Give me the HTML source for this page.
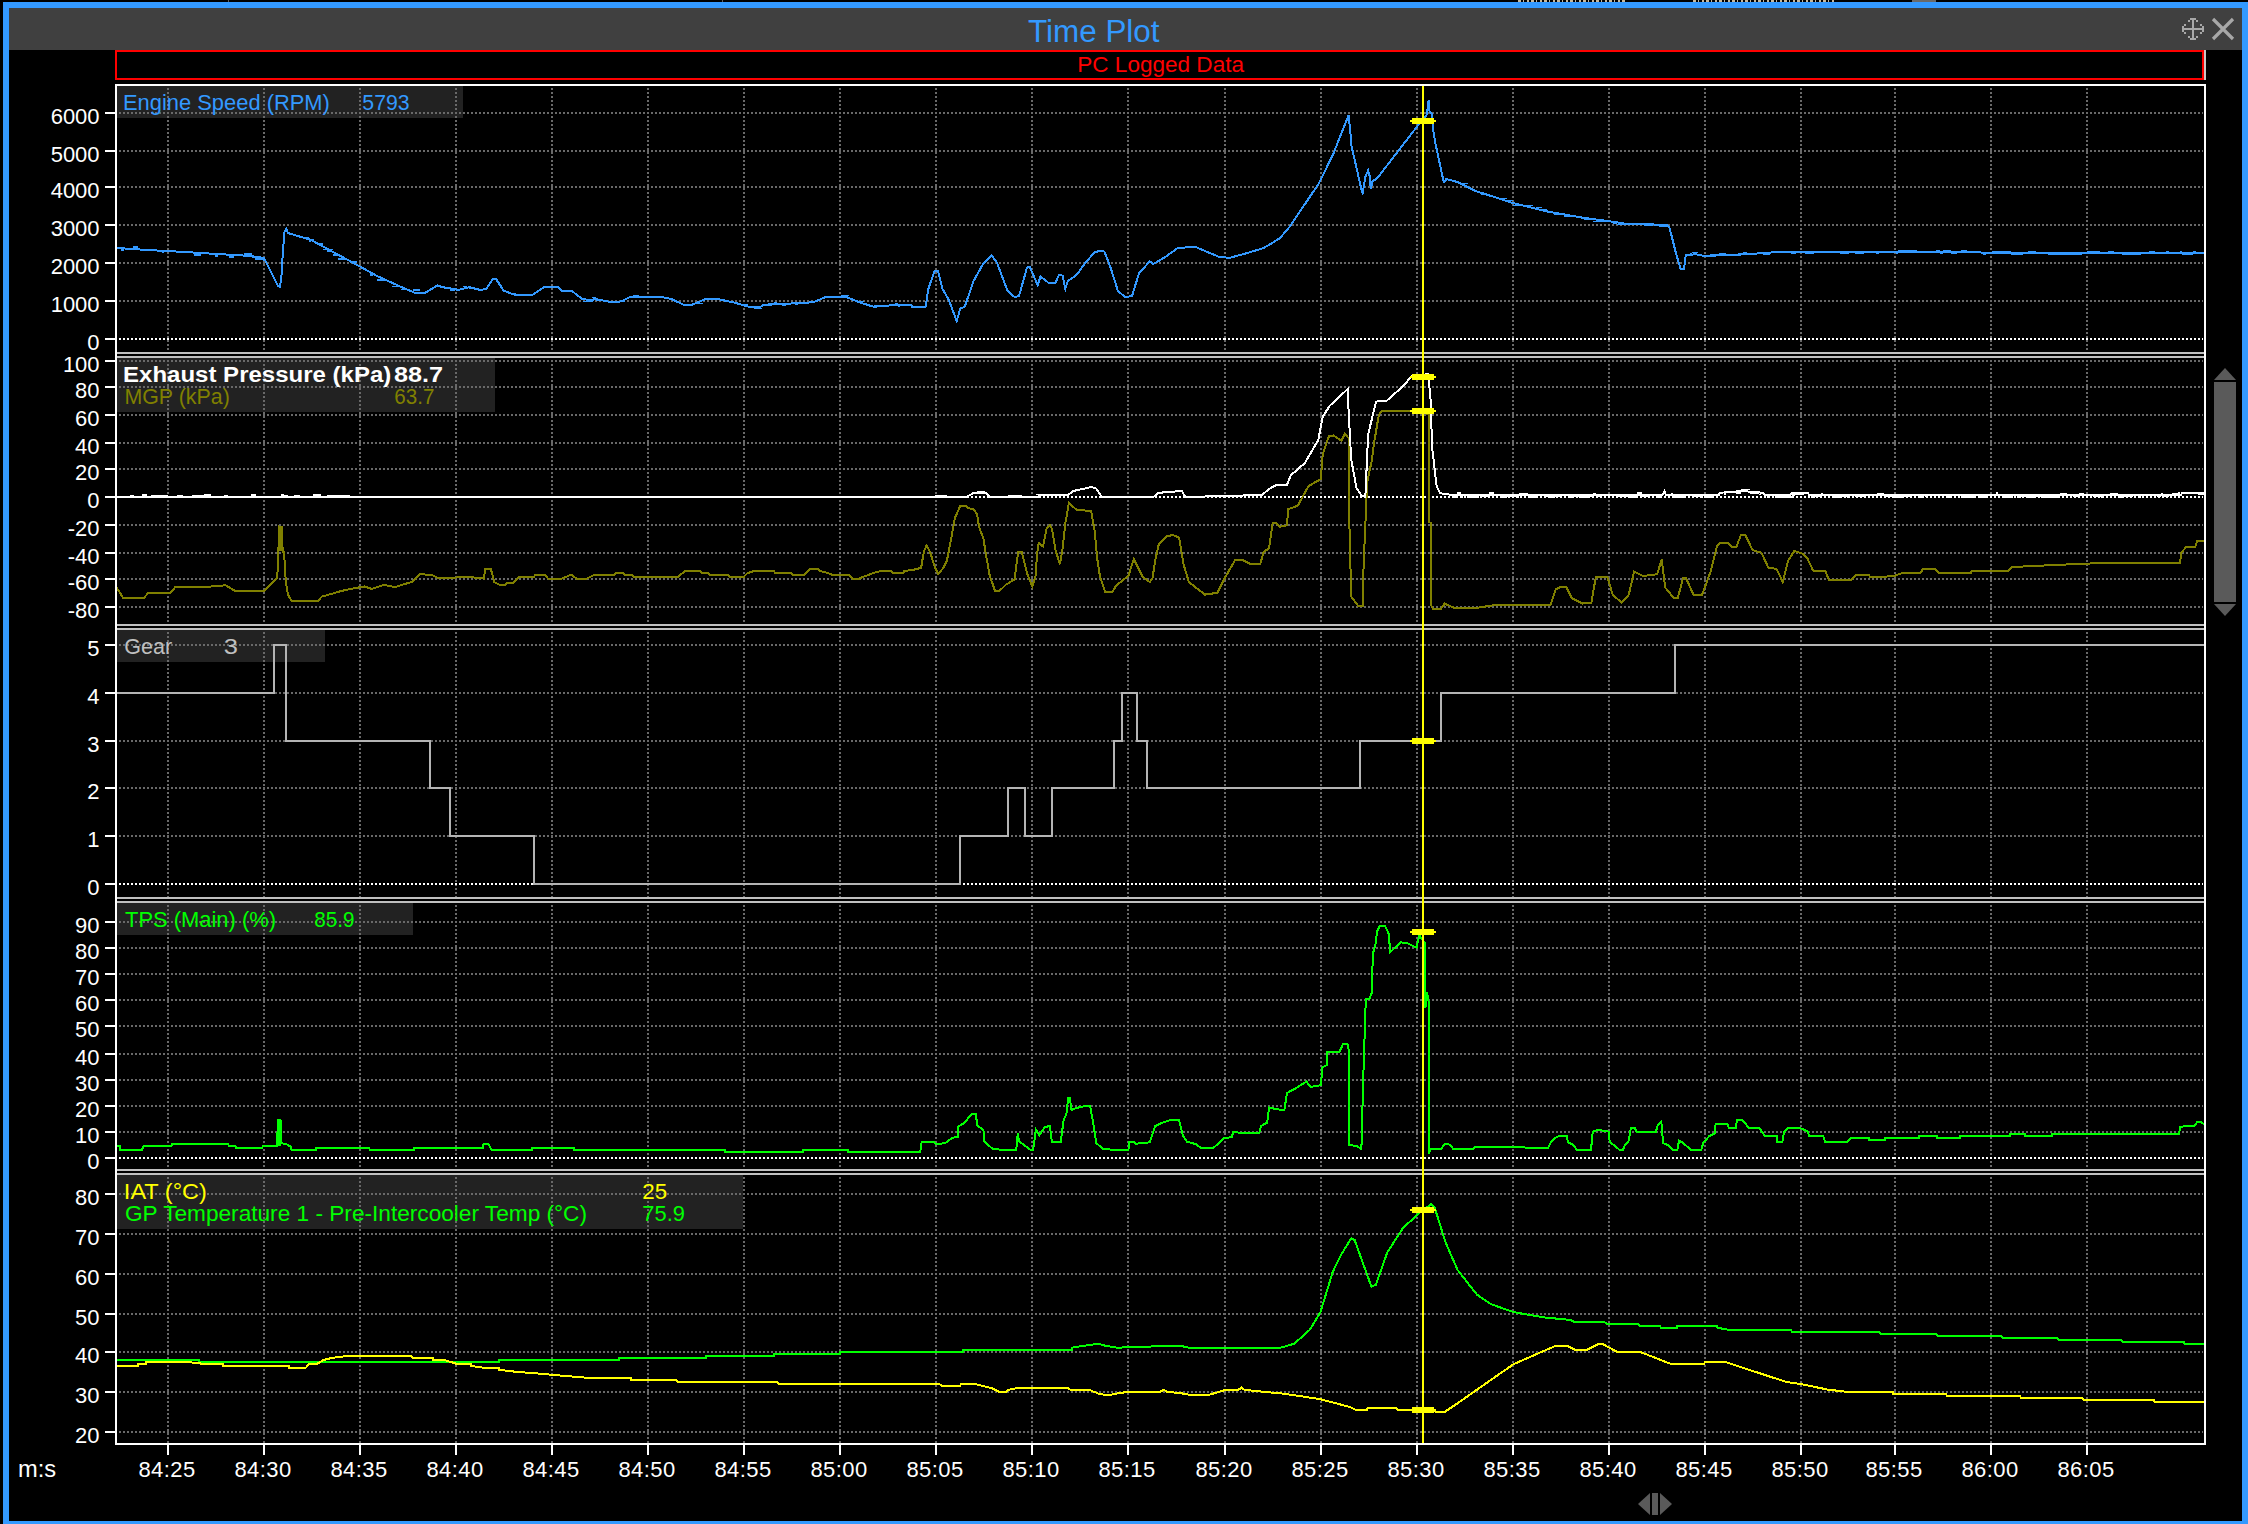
<!DOCTYPE html><html><head><meta charset="utf-8"><title>Time Plot</title><style>
html,body{margin:0;padding:0;background:#000;width:2248px;height:1524px;overflow:hidden}
svg{display:block}
text{font-family:"Liberation Sans",sans-serif}
</style></head><body>
<svg width="2248" height="1524" viewBox="0 0 2248 1524">
<rect x="0" y="0" width="2248" height="1524" fill="#000"/>
<g shape-rendering="crispEdges">
<line x1="1518" y1="1" x2="1625" y2="1" stroke="#c8b89a" stroke-width="2" stroke-dasharray="3 2 1 3 2 2"/>
<line x1="1693" y1="1" x2="1835" y2="1" stroke="#c8b89a" stroke-width="2" stroke-dasharray="3 2 1 3 2 2"/>
<rect x="1912" y="0" width="24" height="2" fill="#6a6a6a"/>
<rect x="228" y="0" width="1" height="2" fill="#606060"/><rect x="722" y="0" width="1" height="2" fill="#606060"/>
<rect x="3" y="2" width="2245" height="1522" fill="#3399ff"/>
<rect x="9" y="8" width="2233" height="1513" fill="#000"/>
<rect x="9" y="8" width="2233" height="42" fill="#404040"/>
<rect x="116" y="51" width="2087" height="28" fill="none" stroke="#ff0000" stroke-width="2"/>
<rect x="2204" y="50" width="2" height="30" fill="#c8c8c8"/>
<rect x="117" y="86" width="346" height="32" fill="#222"/>
<rect x="117" y="358" width="378" height="54" fill="#222"/>
<rect x="117" y="630" width="208" height="32" fill="#222"/>
<rect x="117" y="903" width="296" height="32" fill="#222"/>
<rect x="117" y="1175" width="626" height="54" fill="#222"/>
</g>
<g shape-rendering="crispEdges" stroke-width="2" stroke-dasharray="2 2">
<line x1="168" y1="84" x2="168" y2="352" stroke="#696969"/>
<line x1="264" y1="84" x2="264" y2="352" stroke="#696969"/>
<line x1="360" y1="84" x2="360" y2="352" stroke="#696969"/>
<line x1="456" y1="84" x2="456" y2="352" stroke="#696969"/>
<line x1="552" y1="84" x2="552" y2="352" stroke="#696969"/>
<line x1="648" y1="84" x2="648" y2="352" stroke="#696969"/>
<line x1="744" y1="84" x2="744" y2="352" stroke="#696969"/>
<line x1="840" y1="84" x2="840" y2="352" stroke="#696969"/>
<line x1="936" y1="84" x2="936" y2="352" stroke="#696969"/>
<line x1="1032" y1="84" x2="1032" y2="352" stroke="#696969"/>
<line x1="1128" y1="84" x2="1128" y2="352" stroke="#696969"/>
<line x1="1225" y1="84" x2="1225" y2="352" stroke="#696969"/>
<line x1="1321" y1="84" x2="1321" y2="352" stroke="#696969"/>
<line x1="1417" y1="84" x2="1417" y2="352" stroke="#696969"/>
<line x1="1513" y1="84" x2="1513" y2="352" stroke="#696969"/>
<line x1="1609" y1="84" x2="1609" y2="352" stroke="#696969"/>
<line x1="1705" y1="84" x2="1705" y2="352" stroke="#696969"/>
<line x1="1801" y1="84" x2="1801" y2="352" stroke="#696969"/>
<line x1="1895" y1="84" x2="1895" y2="352" stroke="#696969"/>
<line x1="1991" y1="84" x2="1991" y2="352" stroke="#696969"/>
<line x1="2087" y1="84" x2="2087" y2="352" stroke="#696969"/>
<line x1="168" y1="356" x2="168" y2="624" stroke="#696969"/>
<line x1="264" y1="356" x2="264" y2="624" stroke="#696969"/>
<line x1="360" y1="356" x2="360" y2="624" stroke="#696969"/>
<line x1="456" y1="356" x2="456" y2="624" stroke="#696969"/>
<line x1="552" y1="356" x2="552" y2="624" stroke="#696969"/>
<line x1="648" y1="356" x2="648" y2="624" stroke="#696969"/>
<line x1="744" y1="356" x2="744" y2="624" stroke="#696969"/>
<line x1="840" y1="356" x2="840" y2="624" stroke="#696969"/>
<line x1="936" y1="356" x2="936" y2="624" stroke="#696969"/>
<line x1="1032" y1="356" x2="1032" y2="624" stroke="#696969"/>
<line x1="1128" y1="356" x2="1128" y2="624" stroke="#696969"/>
<line x1="1225" y1="356" x2="1225" y2="624" stroke="#696969"/>
<line x1="1321" y1="356" x2="1321" y2="624" stroke="#696969"/>
<line x1="1417" y1="356" x2="1417" y2="624" stroke="#696969"/>
<line x1="1513" y1="356" x2="1513" y2="624" stroke="#696969"/>
<line x1="1609" y1="356" x2="1609" y2="624" stroke="#696969"/>
<line x1="1705" y1="356" x2="1705" y2="624" stroke="#696969"/>
<line x1="1801" y1="356" x2="1801" y2="624" stroke="#696969"/>
<line x1="1895" y1="356" x2="1895" y2="624" stroke="#696969"/>
<line x1="1991" y1="356" x2="1991" y2="624" stroke="#696969"/>
<line x1="2087" y1="356" x2="2087" y2="624" stroke="#696969"/>
<line x1="168" y1="628" x2="168" y2="897" stroke="#696969"/>
<line x1="264" y1="628" x2="264" y2="897" stroke="#696969"/>
<line x1="360" y1="628" x2="360" y2="897" stroke="#696969"/>
<line x1="456" y1="628" x2="456" y2="897" stroke="#696969"/>
<line x1="552" y1="628" x2="552" y2="897" stroke="#696969"/>
<line x1="648" y1="628" x2="648" y2="897" stroke="#696969"/>
<line x1="744" y1="628" x2="744" y2="897" stroke="#696969"/>
<line x1="840" y1="628" x2="840" y2="897" stroke="#696969"/>
<line x1="936" y1="628" x2="936" y2="897" stroke="#696969"/>
<line x1="1032" y1="628" x2="1032" y2="897" stroke="#696969"/>
<line x1="1128" y1="628" x2="1128" y2="897" stroke="#696969"/>
<line x1="1225" y1="628" x2="1225" y2="897" stroke="#696969"/>
<line x1="1321" y1="628" x2="1321" y2="897" stroke="#696969"/>
<line x1="1417" y1="628" x2="1417" y2="897" stroke="#696969"/>
<line x1="1513" y1="628" x2="1513" y2="897" stroke="#696969"/>
<line x1="1609" y1="628" x2="1609" y2="897" stroke="#696969"/>
<line x1="1705" y1="628" x2="1705" y2="897" stroke="#696969"/>
<line x1="1801" y1="628" x2="1801" y2="897" stroke="#696969"/>
<line x1="1895" y1="628" x2="1895" y2="897" stroke="#696969"/>
<line x1="1991" y1="628" x2="1991" y2="897" stroke="#696969"/>
<line x1="2087" y1="628" x2="2087" y2="897" stroke="#696969"/>
<line x1="168" y1="901" x2="168" y2="1169" stroke="#696969"/>
<line x1="264" y1="901" x2="264" y2="1169" stroke="#696969"/>
<line x1="360" y1="901" x2="360" y2="1169" stroke="#696969"/>
<line x1="456" y1="901" x2="456" y2="1169" stroke="#696969"/>
<line x1="552" y1="901" x2="552" y2="1169" stroke="#696969"/>
<line x1="648" y1="901" x2="648" y2="1169" stroke="#696969"/>
<line x1="744" y1="901" x2="744" y2="1169" stroke="#696969"/>
<line x1="840" y1="901" x2="840" y2="1169" stroke="#696969"/>
<line x1="936" y1="901" x2="936" y2="1169" stroke="#696969"/>
<line x1="1032" y1="901" x2="1032" y2="1169" stroke="#696969"/>
<line x1="1128" y1="901" x2="1128" y2="1169" stroke="#696969"/>
<line x1="1225" y1="901" x2="1225" y2="1169" stroke="#696969"/>
<line x1="1321" y1="901" x2="1321" y2="1169" stroke="#696969"/>
<line x1="1417" y1="901" x2="1417" y2="1169" stroke="#696969"/>
<line x1="1513" y1="901" x2="1513" y2="1169" stroke="#696969"/>
<line x1="1609" y1="901" x2="1609" y2="1169" stroke="#696969"/>
<line x1="1705" y1="901" x2="1705" y2="1169" stroke="#696969"/>
<line x1="1801" y1="901" x2="1801" y2="1169" stroke="#696969"/>
<line x1="1895" y1="901" x2="1895" y2="1169" stroke="#696969"/>
<line x1="1991" y1="901" x2="1991" y2="1169" stroke="#696969"/>
<line x1="2087" y1="901" x2="2087" y2="1169" stroke="#696969"/>
<line x1="168" y1="1173" x2="168" y2="1443" stroke="#696969"/>
<line x1="264" y1="1173" x2="264" y2="1443" stroke="#696969"/>
<line x1="360" y1="1173" x2="360" y2="1443" stroke="#696969"/>
<line x1="456" y1="1173" x2="456" y2="1443" stroke="#696969"/>
<line x1="552" y1="1173" x2="552" y2="1443" stroke="#696969"/>
<line x1="648" y1="1173" x2="648" y2="1443" stroke="#696969"/>
<line x1="744" y1="1173" x2="744" y2="1443" stroke="#696969"/>
<line x1="840" y1="1173" x2="840" y2="1443" stroke="#696969"/>
<line x1="936" y1="1173" x2="936" y2="1443" stroke="#696969"/>
<line x1="1032" y1="1173" x2="1032" y2="1443" stroke="#696969"/>
<line x1="1128" y1="1173" x2="1128" y2="1443" stroke="#696969"/>
<line x1="1225" y1="1173" x2="1225" y2="1443" stroke="#696969"/>
<line x1="1321" y1="1173" x2="1321" y2="1443" stroke="#696969"/>
<line x1="1417" y1="1173" x2="1417" y2="1443" stroke="#696969"/>
<line x1="1513" y1="1173" x2="1513" y2="1443" stroke="#696969"/>
<line x1="1609" y1="1173" x2="1609" y2="1443" stroke="#696969"/>
<line x1="1705" y1="1173" x2="1705" y2="1443" stroke="#696969"/>
<line x1="1801" y1="1173" x2="1801" y2="1443" stroke="#696969"/>
<line x1="1895" y1="1173" x2="1895" y2="1443" stroke="#696969"/>
<line x1="1991" y1="1173" x2="1991" y2="1443" stroke="#696969"/>
<line x1="2087" y1="1173" x2="2087" y2="1443" stroke="#696969"/>
<line x1="119" y1="113" x2="263" y2="113" stroke="#696969"/>
<line x1="263" y1="113" x2="359" y2="113" stroke="#696969"/>
<line x1="359" y1="113" x2="455" y2="113" stroke="#696969"/>
<line x1="455" y1="113" x2="551" y2="113" stroke="#696969"/>
<line x1="551" y1="113" x2="647" y2="113" stroke="#696969"/>
<line x1="647" y1="113" x2="743" y2="113" stroke="#696969"/>
<line x1="743" y1="113" x2="839" y2="113" stroke="#696969"/>
<line x1="839" y1="113" x2="935" y2="113" stroke="#696969"/>
<line x1="935" y1="113" x2="1031" y2="113" stroke="#696969"/>
<line x1="1031" y1="113" x2="1127" y2="113" stroke="#696969"/>
<line x1="1127" y1="113" x2="1224" y2="113" stroke="#696969"/>
<line x1="1224" y1="113" x2="1320" y2="113" stroke="#696969"/>
<line x1="1320" y1="113" x2="1416" y2="113" stroke="#696969"/>
<line x1="1416" y1="113" x2="1512" y2="113" stroke="#696969"/>
<line x1="1512" y1="113" x2="1608" y2="113" stroke="#696969"/>
<line x1="1608" y1="113" x2="1704" y2="113" stroke="#696969"/>
<line x1="1704" y1="113" x2="1800" y2="113" stroke="#696969"/>
<line x1="1800" y1="113" x2="1894" y2="113" stroke="#696969"/>
<line x1="1894" y1="113" x2="1990" y2="113" stroke="#696969"/>
<line x1="1990" y1="113" x2="2086" y2="113" stroke="#696969"/>
<line x1="2086" y1="113" x2="2203" y2="113" stroke="#696969"/>
<line x1="119" y1="151" x2="263" y2="151" stroke="#696969"/>
<line x1="263" y1="151" x2="359" y2="151" stroke="#696969"/>
<line x1="359" y1="151" x2="455" y2="151" stroke="#696969"/>
<line x1="455" y1="151" x2="551" y2="151" stroke="#696969"/>
<line x1="551" y1="151" x2="647" y2="151" stroke="#696969"/>
<line x1="647" y1="151" x2="743" y2="151" stroke="#696969"/>
<line x1="743" y1="151" x2="839" y2="151" stroke="#696969"/>
<line x1="839" y1="151" x2="935" y2="151" stroke="#696969"/>
<line x1="935" y1="151" x2="1031" y2="151" stroke="#696969"/>
<line x1="1031" y1="151" x2="1127" y2="151" stroke="#696969"/>
<line x1="1127" y1="151" x2="1224" y2="151" stroke="#696969"/>
<line x1="1224" y1="151" x2="1320" y2="151" stroke="#696969"/>
<line x1="1320" y1="151" x2="1416" y2="151" stroke="#696969"/>
<line x1="1416" y1="151" x2="1512" y2="151" stroke="#696969"/>
<line x1="1512" y1="151" x2="1608" y2="151" stroke="#696969"/>
<line x1="1608" y1="151" x2="1704" y2="151" stroke="#696969"/>
<line x1="1704" y1="151" x2="1800" y2="151" stroke="#696969"/>
<line x1="1800" y1="151" x2="1894" y2="151" stroke="#696969"/>
<line x1="1894" y1="151" x2="1990" y2="151" stroke="#696969"/>
<line x1="1990" y1="151" x2="2086" y2="151" stroke="#696969"/>
<line x1="2086" y1="151" x2="2203" y2="151" stroke="#696969"/>
<line x1="119" y1="187" x2="263" y2="187" stroke="#696969"/>
<line x1="263" y1="187" x2="359" y2="187" stroke="#696969"/>
<line x1="359" y1="187" x2="455" y2="187" stroke="#696969"/>
<line x1="455" y1="187" x2="551" y2="187" stroke="#696969"/>
<line x1="551" y1="187" x2="647" y2="187" stroke="#696969"/>
<line x1="647" y1="187" x2="743" y2="187" stroke="#696969"/>
<line x1="743" y1="187" x2="839" y2="187" stroke="#696969"/>
<line x1="839" y1="187" x2="935" y2="187" stroke="#696969"/>
<line x1="935" y1="187" x2="1031" y2="187" stroke="#696969"/>
<line x1="1031" y1="187" x2="1127" y2="187" stroke="#696969"/>
<line x1="1127" y1="187" x2="1224" y2="187" stroke="#696969"/>
<line x1="1224" y1="187" x2="1320" y2="187" stroke="#696969"/>
<line x1="1320" y1="187" x2="1416" y2="187" stroke="#696969"/>
<line x1="1416" y1="187" x2="1512" y2="187" stroke="#696969"/>
<line x1="1512" y1="187" x2="1608" y2="187" stroke="#696969"/>
<line x1="1608" y1="187" x2="1704" y2="187" stroke="#696969"/>
<line x1="1704" y1="187" x2="1800" y2="187" stroke="#696969"/>
<line x1="1800" y1="187" x2="1894" y2="187" stroke="#696969"/>
<line x1="1894" y1="187" x2="1990" y2="187" stroke="#696969"/>
<line x1="1990" y1="187" x2="2086" y2="187" stroke="#696969"/>
<line x1="2086" y1="187" x2="2203" y2="187" stroke="#696969"/>
<line x1="119" y1="225" x2="263" y2="225" stroke="#696969"/>
<line x1="263" y1="225" x2="359" y2="225" stroke="#696969"/>
<line x1="359" y1="225" x2="455" y2="225" stroke="#696969"/>
<line x1="455" y1="225" x2="551" y2="225" stroke="#696969"/>
<line x1="551" y1="225" x2="647" y2="225" stroke="#696969"/>
<line x1="647" y1="225" x2="743" y2="225" stroke="#696969"/>
<line x1="743" y1="225" x2="839" y2="225" stroke="#696969"/>
<line x1="839" y1="225" x2="935" y2="225" stroke="#696969"/>
<line x1="935" y1="225" x2="1031" y2="225" stroke="#696969"/>
<line x1="1031" y1="225" x2="1127" y2="225" stroke="#696969"/>
<line x1="1127" y1="225" x2="1224" y2="225" stroke="#696969"/>
<line x1="1224" y1="225" x2="1320" y2="225" stroke="#696969"/>
<line x1="1320" y1="225" x2="1416" y2="225" stroke="#696969"/>
<line x1="1416" y1="225" x2="1512" y2="225" stroke="#696969"/>
<line x1="1512" y1="225" x2="1608" y2="225" stroke="#696969"/>
<line x1="1608" y1="225" x2="1704" y2="225" stroke="#696969"/>
<line x1="1704" y1="225" x2="1800" y2="225" stroke="#696969"/>
<line x1="1800" y1="225" x2="1894" y2="225" stroke="#696969"/>
<line x1="1894" y1="225" x2="1990" y2="225" stroke="#696969"/>
<line x1="1990" y1="225" x2="2086" y2="225" stroke="#696969"/>
<line x1="2086" y1="225" x2="2203" y2="225" stroke="#696969"/>
<line x1="119" y1="263" x2="263" y2="263" stroke="#696969"/>
<line x1="263" y1="263" x2="359" y2="263" stroke="#696969"/>
<line x1="359" y1="263" x2="455" y2="263" stroke="#696969"/>
<line x1="455" y1="263" x2="551" y2="263" stroke="#696969"/>
<line x1="551" y1="263" x2="647" y2="263" stroke="#696969"/>
<line x1="647" y1="263" x2="743" y2="263" stroke="#696969"/>
<line x1="743" y1="263" x2="839" y2="263" stroke="#696969"/>
<line x1="839" y1="263" x2="935" y2="263" stroke="#696969"/>
<line x1="935" y1="263" x2="1031" y2="263" stroke="#696969"/>
<line x1="1031" y1="263" x2="1127" y2="263" stroke="#696969"/>
<line x1="1127" y1="263" x2="1224" y2="263" stroke="#696969"/>
<line x1="1224" y1="263" x2="1320" y2="263" stroke="#696969"/>
<line x1="1320" y1="263" x2="1416" y2="263" stroke="#696969"/>
<line x1="1416" y1="263" x2="1512" y2="263" stroke="#696969"/>
<line x1="1512" y1="263" x2="1608" y2="263" stroke="#696969"/>
<line x1="1608" y1="263" x2="1704" y2="263" stroke="#696969"/>
<line x1="1704" y1="263" x2="1800" y2="263" stroke="#696969"/>
<line x1="1800" y1="263" x2="1894" y2="263" stroke="#696969"/>
<line x1="1894" y1="263" x2="1990" y2="263" stroke="#696969"/>
<line x1="1990" y1="263" x2="2086" y2="263" stroke="#696969"/>
<line x1="2086" y1="263" x2="2203" y2="263" stroke="#696969"/>
<line x1="119" y1="301" x2="263" y2="301" stroke="#696969"/>
<line x1="263" y1="301" x2="359" y2="301" stroke="#696969"/>
<line x1="359" y1="301" x2="455" y2="301" stroke="#696969"/>
<line x1="455" y1="301" x2="551" y2="301" stroke="#696969"/>
<line x1="551" y1="301" x2="647" y2="301" stroke="#696969"/>
<line x1="647" y1="301" x2="743" y2="301" stroke="#696969"/>
<line x1="743" y1="301" x2="839" y2="301" stroke="#696969"/>
<line x1="839" y1="301" x2="935" y2="301" stroke="#696969"/>
<line x1="935" y1="301" x2="1031" y2="301" stroke="#696969"/>
<line x1="1031" y1="301" x2="1127" y2="301" stroke="#696969"/>
<line x1="1127" y1="301" x2="1224" y2="301" stroke="#696969"/>
<line x1="1224" y1="301" x2="1320" y2="301" stroke="#696969"/>
<line x1="1320" y1="301" x2="1416" y2="301" stroke="#696969"/>
<line x1="1416" y1="301" x2="1512" y2="301" stroke="#696969"/>
<line x1="1512" y1="301" x2="1608" y2="301" stroke="#696969"/>
<line x1="1608" y1="301" x2="1704" y2="301" stroke="#696969"/>
<line x1="1704" y1="301" x2="1800" y2="301" stroke="#696969"/>
<line x1="1800" y1="301" x2="1894" y2="301" stroke="#696969"/>
<line x1="1894" y1="301" x2="1990" y2="301" stroke="#696969"/>
<line x1="1990" y1="301" x2="2086" y2="301" stroke="#696969"/>
<line x1="2086" y1="301" x2="2203" y2="301" stroke="#696969"/>
<line x1="119" y1="339" x2="263" y2="339" stroke="#ffffff"/>
<line x1="263" y1="339" x2="359" y2="339" stroke="#ffffff"/>
<line x1="359" y1="339" x2="455" y2="339" stroke="#ffffff"/>
<line x1="455" y1="339" x2="551" y2="339" stroke="#ffffff"/>
<line x1="551" y1="339" x2="647" y2="339" stroke="#ffffff"/>
<line x1="647" y1="339" x2="743" y2="339" stroke="#ffffff"/>
<line x1="743" y1="339" x2="839" y2="339" stroke="#ffffff"/>
<line x1="839" y1="339" x2="935" y2="339" stroke="#ffffff"/>
<line x1="935" y1="339" x2="1031" y2="339" stroke="#ffffff"/>
<line x1="1031" y1="339" x2="1127" y2="339" stroke="#ffffff"/>
<line x1="1127" y1="339" x2="1224" y2="339" stroke="#ffffff"/>
<line x1="1224" y1="339" x2="1320" y2="339" stroke="#ffffff"/>
<line x1="1320" y1="339" x2="1416" y2="339" stroke="#ffffff"/>
<line x1="1416" y1="339" x2="1512" y2="339" stroke="#ffffff"/>
<line x1="1512" y1="339" x2="1608" y2="339" stroke="#ffffff"/>
<line x1="1608" y1="339" x2="1704" y2="339" stroke="#ffffff"/>
<line x1="1704" y1="339" x2="1800" y2="339" stroke="#ffffff"/>
<line x1="1800" y1="339" x2="1894" y2="339" stroke="#ffffff"/>
<line x1="1894" y1="339" x2="1990" y2="339" stroke="#ffffff"/>
<line x1="1990" y1="339" x2="2086" y2="339" stroke="#ffffff"/>
<line x1="2086" y1="339" x2="2203" y2="339" stroke="#ffffff"/>
<line x1="119" y1="361" x2="263" y2="361" stroke="#696969"/>
<line x1="263" y1="361" x2="359" y2="361" stroke="#696969"/>
<line x1="359" y1="361" x2="455" y2="361" stroke="#696969"/>
<line x1="455" y1="361" x2="551" y2="361" stroke="#696969"/>
<line x1="551" y1="361" x2="647" y2="361" stroke="#696969"/>
<line x1="647" y1="361" x2="743" y2="361" stroke="#696969"/>
<line x1="743" y1="361" x2="839" y2="361" stroke="#696969"/>
<line x1="839" y1="361" x2="935" y2="361" stroke="#696969"/>
<line x1="935" y1="361" x2="1031" y2="361" stroke="#696969"/>
<line x1="1031" y1="361" x2="1127" y2="361" stroke="#696969"/>
<line x1="1127" y1="361" x2="1224" y2="361" stroke="#696969"/>
<line x1="1224" y1="361" x2="1320" y2="361" stroke="#696969"/>
<line x1="1320" y1="361" x2="1416" y2="361" stroke="#696969"/>
<line x1="1416" y1="361" x2="1512" y2="361" stroke="#696969"/>
<line x1="1512" y1="361" x2="1608" y2="361" stroke="#696969"/>
<line x1="1608" y1="361" x2="1704" y2="361" stroke="#696969"/>
<line x1="1704" y1="361" x2="1800" y2="361" stroke="#696969"/>
<line x1="1800" y1="361" x2="1894" y2="361" stroke="#696969"/>
<line x1="1894" y1="361" x2="1990" y2="361" stroke="#696969"/>
<line x1="1990" y1="361" x2="2086" y2="361" stroke="#696969"/>
<line x1="2086" y1="361" x2="2203" y2="361" stroke="#696969"/>
<line x1="119" y1="387" x2="263" y2="387" stroke="#696969"/>
<line x1="263" y1="387" x2="359" y2="387" stroke="#696969"/>
<line x1="359" y1="387" x2="455" y2="387" stroke="#696969"/>
<line x1="455" y1="387" x2="551" y2="387" stroke="#696969"/>
<line x1="551" y1="387" x2="647" y2="387" stroke="#696969"/>
<line x1="647" y1="387" x2="743" y2="387" stroke="#696969"/>
<line x1="743" y1="387" x2="839" y2="387" stroke="#696969"/>
<line x1="839" y1="387" x2="935" y2="387" stroke="#696969"/>
<line x1="935" y1="387" x2="1031" y2="387" stroke="#696969"/>
<line x1="1031" y1="387" x2="1127" y2="387" stroke="#696969"/>
<line x1="1127" y1="387" x2="1224" y2="387" stroke="#696969"/>
<line x1="1224" y1="387" x2="1320" y2="387" stroke="#696969"/>
<line x1="1320" y1="387" x2="1416" y2="387" stroke="#696969"/>
<line x1="1416" y1="387" x2="1512" y2="387" stroke="#696969"/>
<line x1="1512" y1="387" x2="1608" y2="387" stroke="#696969"/>
<line x1="1608" y1="387" x2="1704" y2="387" stroke="#696969"/>
<line x1="1704" y1="387" x2="1800" y2="387" stroke="#696969"/>
<line x1="1800" y1="387" x2="1894" y2="387" stroke="#696969"/>
<line x1="1894" y1="387" x2="1990" y2="387" stroke="#696969"/>
<line x1="1990" y1="387" x2="2086" y2="387" stroke="#696969"/>
<line x1="2086" y1="387" x2="2203" y2="387" stroke="#696969"/>
<line x1="119" y1="415" x2="263" y2="415" stroke="#696969"/>
<line x1="263" y1="415" x2="359" y2="415" stroke="#696969"/>
<line x1="359" y1="415" x2="455" y2="415" stroke="#696969"/>
<line x1="455" y1="415" x2="551" y2="415" stroke="#696969"/>
<line x1="551" y1="415" x2="647" y2="415" stroke="#696969"/>
<line x1="647" y1="415" x2="743" y2="415" stroke="#696969"/>
<line x1="743" y1="415" x2="839" y2="415" stroke="#696969"/>
<line x1="839" y1="415" x2="935" y2="415" stroke="#696969"/>
<line x1="935" y1="415" x2="1031" y2="415" stroke="#696969"/>
<line x1="1031" y1="415" x2="1127" y2="415" stroke="#696969"/>
<line x1="1127" y1="415" x2="1224" y2="415" stroke="#696969"/>
<line x1="1224" y1="415" x2="1320" y2="415" stroke="#696969"/>
<line x1="1320" y1="415" x2="1416" y2="415" stroke="#696969"/>
<line x1="1416" y1="415" x2="1512" y2="415" stroke="#696969"/>
<line x1="1512" y1="415" x2="1608" y2="415" stroke="#696969"/>
<line x1="1608" y1="415" x2="1704" y2="415" stroke="#696969"/>
<line x1="1704" y1="415" x2="1800" y2="415" stroke="#696969"/>
<line x1="1800" y1="415" x2="1894" y2="415" stroke="#696969"/>
<line x1="1894" y1="415" x2="1990" y2="415" stroke="#696969"/>
<line x1="1990" y1="415" x2="2086" y2="415" stroke="#696969"/>
<line x1="2086" y1="415" x2="2203" y2="415" stroke="#696969"/>
<line x1="119" y1="443" x2="263" y2="443" stroke="#696969"/>
<line x1="263" y1="443" x2="359" y2="443" stroke="#696969"/>
<line x1="359" y1="443" x2="455" y2="443" stroke="#696969"/>
<line x1="455" y1="443" x2="551" y2="443" stroke="#696969"/>
<line x1="551" y1="443" x2="647" y2="443" stroke="#696969"/>
<line x1="647" y1="443" x2="743" y2="443" stroke="#696969"/>
<line x1="743" y1="443" x2="839" y2="443" stroke="#696969"/>
<line x1="839" y1="443" x2="935" y2="443" stroke="#696969"/>
<line x1="935" y1="443" x2="1031" y2="443" stroke="#696969"/>
<line x1="1031" y1="443" x2="1127" y2="443" stroke="#696969"/>
<line x1="1127" y1="443" x2="1224" y2="443" stroke="#696969"/>
<line x1="1224" y1="443" x2="1320" y2="443" stroke="#696969"/>
<line x1="1320" y1="443" x2="1416" y2="443" stroke="#696969"/>
<line x1="1416" y1="443" x2="1512" y2="443" stroke="#696969"/>
<line x1="1512" y1="443" x2="1608" y2="443" stroke="#696969"/>
<line x1="1608" y1="443" x2="1704" y2="443" stroke="#696969"/>
<line x1="1704" y1="443" x2="1800" y2="443" stroke="#696969"/>
<line x1="1800" y1="443" x2="1894" y2="443" stroke="#696969"/>
<line x1="1894" y1="443" x2="1990" y2="443" stroke="#696969"/>
<line x1="1990" y1="443" x2="2086" y2="443" stroke="#696969"/>
<line x1="2086" y1="443" x2="2203" y2="443" stroke="#696969"/>
<line x1="119" y1="469" x2="263" y2="469" stroke="#696969"/>
<line x1="263" y1="469" x2="359" y2="469" stroke="#696969"/>
<line x1="359" y1="469" x2="455" y2="469" stroke="#696969"/>
<line x1="455" y1="469" x2="551" y2="469" stroke="#696969"/>
<line x1="551" y1="469" x2="647" y2="469" stroke="#696969"/>
<line x1="647" y1="469" x2="743" y2="469" stroke="#696969"/>
<line x1="743" y1="469" x2="839" y2="469" stroke="#696969"/>
<line x1="839" y1="469" x2="935" y2="469" stroke="#696969"/>
<line x1="935" y1="469" x2="1031" y2="469" stroke="#696969"/>
<line x1="1031" y1="469" x2="1127" y2="469" stroke="#696969"/>
<line x1="1127" y1="469" x2="1224" y2="469" stroke="#696969"/>
<line x1="1224" y1="469" x2="1320" y2="469" stroke="#696969"/>
<line x1="1320" y1="469" x2="1416" y2="469" stroke="#696969"/>
<line x1="1416" y1="469" x2="1512" y2="469" stroke="#696969"/>
<line x1="1512" y1="469" x2="1608" y2="469" stroke="#696969"/>
<line x1="1608" y1="469" x2="1704" y2="469" stroke="#696969"/>
<line x1="1704" y1="469" x2="1800" y2="469" stroke="#696969"/>
<line x1="1800" y1="469" x2="1894" y2="469" stroke="#696969"/>
<line x1="1894" y1="469" x2="1990" y2="469" stroke="#696969"/>
<line x1="1990" y1="469" x2="2086" y2="469" stroke="#696969"/>
<line x1="2086" y1="469" x2="2203" y2="469" stroke="#696969"/>
<line x1="119" y1="497" x2="263" y2="497" stroke="#ffffff"/>
<line x1="263" y1="497" x2="359" y2="497" stroke="#ffffff"/>
<line x1="359" y1="497" x2="455" y2="497" stroke="#ffffff"/>
<line x1="455" y1="497" x2="551" y2="497" stroke="#ffffff"/>
<line x1="551" y1="497" x2="647" y2="497" stroke="#ffffff"/>
<line x1="647" y1="497" x2="743" y2="497" stroke="#ffffff"/>
<line x1="743" y1="497" x2="839" y2="497" stroke="#ffffff"/>
<line x1="839" y1="497" x2="935" y2="497" stroke="#ffffff"/>
<line x1="935" y1="497" x2="1031" y2="497" stroke="#ffffff"/>
<line x1="1031" y1="497" x2="1127" y2="497" stroke="#ffffff"/>
<line x1="1127" y1="497" x2="1224" y2="497" stroke="#ffffff"/>
<line x1="1224" y1="497" x2="1320" y2="497" stroke="#ffffff"/>
<line x1="1320" y1="497" x2="1416" y2="497" stroke="#ffffff"/>
<line x1="1416" y1="497" x2="1512" y2="497" stroke="#ffffff"/>
<line x1="1512" y1="497" x2="1608" y2="497" stroke="#ffffff"/>
<line x1="1608" y1="497" x2="1704" y2="497" stroke="#ffffff"/>
<line x1="1704" y1="497" x2="1800" y2="497" stroke="#ffffff"/>
<line x1="1800" y1="497" x2="1894" y2="497" stroke="#ffffff"/>
<line x1="1894" y1="497" x2="1990" y2="497" stroke="#ffffff"/>
<line x1="1990" y1="497" x2="2086" y2="497" stroke="#ffffff"/>
<line x1="2086" y1="497" x2="2203" y2="497" stroke="#ffffff"/>
<line x1="119" y1="525" x2="263" y2="525" stroke="#696969"/>
<line x1="263" y1="525" x2="359" y2="525" stroke="#696969"/>
<line x1="359" y1="525" x2="455" y2="525" stroke="#696969"/>
<line x1="455" y1="525" x2="551" y2="525" stroke="#696969"/>
<line x1="551" y1="525" x2="647" y2="525" stroke="#696969"/>
<line x1="647" y1="525" x2="743" y2="525" stroke="#696969"/>
<line x1="743" y1="525" x2="839" y2="525" stroke="#696969"/>
<line x1="839" y1="525" x2="935" y2="525" stroke="#696969"/>
<line x1="935" y1="525" x2="1031" y2="525" stroke="#696969"/>
<line x1="1031" y1="525" x2="1127" y2="525" stroke="#696969"/>
<line x1="1127" y1="525" x2="1224" y2="525" stroke="#696969"/>
<line x1="1224" y1="525" x2="1320" y2="525" stroke="#696969"/>
<line x1="1320" y1="525" x2="1416" y2="525" stroke="#696969"/>
<line x1="1416" y1="525" x2="1512" y2="525" stroke="#696969"/>
<line x1="1512" y1="525" x2="1608" y2="525" stroke="#696969"/>
<line x1="1608" y1="525" x2="1704" y2="525" stroke="#696969"/>
<line x1="1704" y1="525" x2="1800" y2="525" stroke="#696969"/>
<line x1="1800" y1="525" x2="1894" y2="525" stroke="#696969"/>
<line x1="1894" y1="525" x2="1990" y2="525" stroke="#696969"/>
<line x1="1990" y1="525" x2="2086" y2="525" stroke="#696969"/>
<line x1="2086" y1="525" x2="2203" y2="525" stroke="#696969"/>
<line x1="119" y1="553" x2="263" y2="553" stroke="#696969"/>
<line x1="263" y1="553" x2="359" y2="553" stroke="#696969"/>
<line x1="359" y1="553" x2="455" y2="553" stroke="#696969"/>
<line x1="455" y1="553" x2="551" y2="553" stroke="#696969"/>
<line x1="551" y1="553" x2="647" y2="553" stroke="#696969"/>
<line x1="647" y1="553" x2="743" y2="553" stroke="#696969"/>
<line x1="743" y1="553" x2="839" y2="553" stroke="#696969"/>
<line x1="839" y1="553" x2="935" y2="553" stroke="#696969"/>
<line x1="935" y1="553" x2="1031" y2="553" stroke="#696969"/>
<line x1="1031" y1="553" x2="1127" y2="553" stroke="#696969"/>
<line x1="1127" y1="553" x2="1224" y2="553" stroke="#696969"/>
<line x1="1224" y1="553" x2="1320" y2="553" stroke="#696969"/>
<line x1="1320" y1="553" x2="1416" y2="553" stroke="#696969"/>
<line x1="1416" y1="553" x2="1512" y2="553" stroke="#696969"/>
<line x1="1512" y1="553" x2="1608" y2="553" stroke="#696969"/>
<line x1="1608" y1="553" x2="1704" y2="553" stroke="#696969"/>
<line x1="1704" y1="553" x2="1800" y2="553" stroke="#696969"/>
<line x1="1800" y1="553" x2="1894" y2="553" stroke="#696969"/>
<line x1="1894" y1="553" x2="1990" y2="553" stroke="#696969"/>
<line x1="1990" y1="553" x2="2086" y2="553" stroke="#696969"/>
<line x1="2086" y1="553" x2="2203" y2="553" stroke="#696969"/>
<line x1="119" y1="579" x2="263" y2="579" stroke="#696969"/>
<line x1="263" y1="579" x2="359" y2="579" stroke="#696969"/>
<line x1="359" y1="579" x2="455" y2="579" stroke="#696969"/>
<line x1="455" y1="579" x2="551" y2="579" stroke="#696969"/>
<line x1="551" y1="579" x2="647" y2="579" stroke="#696969"/>
<line x1="647" y1="579" x2="743" y2="579" stroke="#696969"/>
<line x1="743" y1="579" x2="839" y2="579" stroke="#696969"/>
<line x1="839" y1="579" x2="935" y2="579" stroke="#696969"/>
<line x1="935" y1="579" x2="1031" y2="579" stroke="#696969"/>
<line x1="1031" y1="579" x2="1127" y2="579" stroke="#696969"/>
<line x1="1127" y1="579" x2="1224" y2="579" stroke="#696969"/>
<line x1="1224" y1="579" x2="1320" y2="579" stroke="#696969"/>
<line x1="1320" y1="579" x2="1416" y2="579" stroke="#696969"/>
<line x1="1416" y1="579" x2="1512" y2="579" stroke="#696969"/>
<line x1="1512" y1="579" x2="1608" y2="579" stroke="#696969"/>
<line x1="1608" y1="579" x2="1704" y2="579" stroke="#696969"/>
<line x1="1704" y1="579" x2="1800" y2="579" stroke="#696969"/>
<line x1="1800" y1="579" x2="1894" y2="579" stroke="#696969"/>
<line x1="1894" y1="579" x2="1990" y2="579" stroke="#696969"/>
<line x1="1990" y1="579" x2="2086" y2="579" stroke="#696969"/>
<line x1="2086" y1="579" x2="2203" y2="579" stroke="#696969"/>
<line x1="119" y1="607" x2="263" y2="607" stroke="#696969"/>
<line x1="263" y1="607" x2="359" y2="607" stroke="#696969"/>
<line x1="359" y1="607" x2="455" y2="607" stroke="#696969"/>
<line x1="455" y1="607" x2="551" y2="607" stroke="#696969"/>
<line x1="551" y1="607" x2="647" y2="607" stroke="#696969"/>
<line x1="647" y1="607" x2="743" y2="607" stroke="#696969"/>
<line x1="743" y1="607" x2="839" y2="607" stroke="#696969"/>
<line x1="839" y1="607" x2="935" y2="607" stroke="#696969"/>
<line x1="935" y1="607" x2="1031" y2="607" stroke="#696969"/>
<line x1="1031" y1="607" x2="1127" y2="607" stroke="#696969"/>
<line x1="1127" y1="607" x2="1224" y2="607" stroke="#696969"/>
<line x1="1224" y1="607" x2="1320" y2="607" stroke="#696969"/>
<line x1="1320" y1="607" x2="1416" y2="607" stroke="#696969"/>
<line x1="1416" y1="607" x2="1512" y2="607" stroke="#696969"/>
<line x1="1512" y1="607" x2="1608" y2="607" stroke="#696969"/>
<line x1="1608" y1="607" x2="1704" y2="607" stroke="#696969"/>
<line x1="1704" y1="607" x2="1800" y2="607" stroke="#696969"/>
<line x1="1800" y1="607" x2="1894" y2="607" stroke="#696969"/>
<line x1="1894" y1="607" x2="1990" y2="607" stroke="#696969"/>
<line x1="1990" y1="607" x2="2086" y2="607" stroke="#696969"/>
<line x1="2086" y1="607" x2="2203" y2="607" stroke="#696969"/>
<line x1="119" y1="645" x2="263" y2="645" stroke="#696969"/>
<line x1="263" y1="645" x2="359" y2="645" stroke="#696969"/>
<line x1="359" y1="645" x2="455" y2="645" stroke="#696969"/>
<line x1="455" y1="645" x2="551" y2="645" stroke="#696969"/>
<line x1="551" y1="645" x2="647" y2="645" stroke="#696969"/>
<line x1="647" y1="645" x2="743" y2="645" stroke="#696969"/>
<line x1="743" y1="645" x2="839" y2="645" stroke="#696969"/>
<line x1="839" y1="645" x2="935" y2="645" stroke="#696969"/>
<line x1="935" y1="645" x2="1031" y2="645" stroke="#696969"/>
<line x1="1031" y1="645" x2="1127" y2="645" stroke="#696969"/>
<line x1="1127" y1="645" x2="1224" y2="645" stroke="#696969"/>
<line x1="1224" y1="645" x2="1320" y2="645" stroke="#696969"/>
<line x1="1320" y1="645" x2="1416" y2="645" stroke="#696969"/>
<line x1="1416" y1="645" x2="1512" y2="645" stroke="#696969"/>
<line x1="1512" y1="645" x2="1608" y2="645" stroke="#696969"/>
<line x1="1608" y1="645" x2="1704" y2="645" stroke="#696969"/>
<line x1="1704" y1="645" x2="1800" y2="645" stroke="#696969"/>
<line x1="1800" y1="645" x2="1894" y2="645" stroke="#696969"/>
<line x1="1894" y1="645" x2="1990" y2="645" stroke="#696969"/>
<line x1="1990" y1="645" x2="2086" y2="645" stroke="#696969"/>
<line x1="2086" y1="645" x2="2203" y2="645" stroke="#696969"/>
<line x1="119" y1="693" x2="263" y2="693" stroke="#696969"/>
<line x1="263" y1="693" x2="359" y2="693" stroke="#696969"/>
<line x1="359" y1="693" x2="455" y2="693" stroke="#696969"/>
<line x1="455" y1="693" x2="551" y2="693" stroke="#696969"/>
<line x1="551" y1="693" x2="647" y2="693" stroke="#696969"/>
<line x1="647" y1="693" x2="743" y2="693" stroke="#696969"/>
<line x1="743" y1="693" x2="839" y2="693" stroke="#696969"/>
<line x1="839" y1="693" x2="935" y2="693" stroke="#696969"/>
<line x1="935" y1="693" x2="1031" y2="693" stroke="#696969"/>
<line x1="1031" y1="693" x2="1127" y2="693" stroke="#696969"/>
<line x1="1127" y1="693" x2="1224" y2="693" stroke="#696969"/>
<line x1="1224" y1="693" x2="1320" y2="693" stroke="#696969"/>
<line x1="1320" y1="693" x2="1416" y2="693" stroke="#696969"/>
<line x1="1416" y1="693" x2="1512" y2="693" stroke="#696969"/>
<line x1="1512" y1="693" x2="1608" y2="693" stroke="#696969"/>
<line x1="1608" y1="693" x2="1704" y2="693" stroke="#696969"/>
<line x1="1704" y1="693" x2="1800" y2="693" stroke="#696969"/>
<line x1="1800" y1="693" x2="1894" y2="693" stroke="#696969"/>
<line x1="1894" y1="693" x2="1990" y2="693" stroke="#696969"/>
<line x1="1990" y1="693" x2="2086" y2="693" stroke="#696969"/>
<line x1="2086" y1="693" x2="2203" y2="693" stroke="#696969"/>
<line x1="119" y1="741" x2="263" y2="741" stroke="#696969"/>
<line x1="263" y1="741" x2="359" y2="741" stroke="#696969"/>
<line x1="359" y1="741" x2="455" y2="741" stroke="#696969"/>
<line x1="455" y1="741" x2="551" y2="741" stroke="#696969"/>
<line x1="551" y1="741" x2="647" y2="741" stroke="#696969"/>
<line x1="647" y1="741" x2="743" y2="741" stroke="#696969"/>
<line x1="743" y1="741" x2="839" y2="741" stroke="#696969"/>
<line x1="839" y1="741" x2="935" y2="741" stroke="#696969"/>
<line x1="935" y1="741" x2="1031" y2="741" stroke="#696969"/>
<line x1="1031" y1="741" x2="1127" y2="741" stroke="#696969"/>
<line x1="1127" y1="741" x2="1224" y2="741" stroke="#696969"/>
<line x1="1224" y1="741" x2="1320" y2="741" stroke="#696969"/>
<line x1="1320" y1="741" x2="1416" y2="741" stroke="#696969"/>
<line x1="1416" y1="741" x2="1512" y2="741" stroke="#696969"/>
<line x1="1512" y1="741" x2="1608" y2="741" stroke="#696969"/>
<line x1="1608" y1="741" x2="1704" y2="741" stroke="#696969"/>
<line x1="1704" y1="741" x2="1800" y2="741" stroke="#696969"/>
<line x1="1800" y1="741" x2="1894" y2="741" stroke="#696969"/>
<line x1="1894" y1="741" x2="1990" y2="741" stroke="#696969"/>
<line x1="1990" y1="741" x2="2086" y2="741" stroke="#696969"/>
<line x1="2086" y1="741" x2="2203" y2="741" stroke="#696969"/>
<line x1="119" y1="788" x2="263" y2="788" stroke="#696969"/>
<line x1="263" y1="788" x2="359" y2="788" stroke="#696969"/>
<line x1="359" y1="788" x2="455" y2="788" stroke="#696969"/>
<line x1="455" y1="788" x2="551" y2="788" stroke="#696969"/>
<line x1="551" y1="788" x2="647" y2="788" stroke="#696969"/>
<line x1="647" y1="788" x2="743" y2="788" stroke="#696969"/>
<line x1="743" y1="788" x2="839" y2="788" stroke="#696969"/>
<line x1="839" y1="788" x2="935" y2="788" stroke="#696969"/>
<line x1="935" y1="788" x2="1031" y2="788" stroke="#696969"/>
<line x1="1031" y1="788" x2="1127" y2="788" stroke="#696969"/>
<line x1="1127" y1="788" x2="1224" y2="788" stroke="#696969"/>
<line x1="1224" y1="788" x2="1320" y2="788" stroke="#696969"/>
<line x1="1320" y1="788" x2="1416" y2="788" stroke="#696969"/>
<line x1="1416" y1="788" x2="1512" y2="788" stroke="#696969"/>
<line x1="1512" y1="788" x2="1608" y2="788" stroke="#696969"/>
<line x1="1608" y1="788" x2="1704" y2="788" stroke="#696969"/>
<line x1="1704" y1="788" x2="1800" y2="788" stroke="#696969"/>
<line x1="1800" y1="788" x2="1894" y2="788" stroke="#696969"/>
<line x1="1894" y1="788" x2="1990" y2="788" stroke="#696969"/>
<line x1="1990" y1="788" x2="2086" y2="788" stroke="#696969"/>
<line x1="2086" y1="788" x2="2203" y2="788" stroke="#696969"/>
<line x1="119" y1="836" x2="263" y2="836" stroke="#696969"/>
<line x1="263" y1="836" x2="359" y2="836" stroke="#696969"/>
<line x1="359" y1="836" x2="455" y2="836" stroke="#696969"/>
<line x1="455" y1="836" x2="551" y2="836" stroke="#696969"/>
<line x1="551" y1="836" x2="647" y2="836" stroke="#696969"/>
<line x1="647" y1="836" x2="743" y2="836" stroke="#696969"/>
<line x1="743" y1="836" x2="839" y2="836" stroke="#696969"/>
<line x1="839" y1="836" x2="935" y2="836" stroke="#696969"/>
<line x1="935" y1="836" x2="1031" y2="836" stroke="#696969"/>
<line x1="1031" y1="836" x2="1127" y2="836" stroke="#696969"/>
<line x1="1127" y1="836" x2="1224" y2="836" stroke="#696969"/>
<line x1="1224" y1="836" x2="1320" y2="836" stroke="#696969"/>
<line x1="1320" y1="836" x2="1416" y2="836" stroke="#696969"/>
<line x1="1416" y1="836" x2="1512" y2="836" stroke="#696969"/>
<line x1="1512" y1="836" x2="1608" y2="836" stroke="#696969"/>
<line x1="1608" y1="836" x2="1704" y2="836" stroke="#696969"/>
<line x1="1704" y1="836" x2="1800" y2="836" stroke="#696969"/>
<line x1="1800" y1="836" x2="1894" y2="836" stroke="#696969"/>
<line x1="1894" y1="836" x2="1990" y2="836" stroke="#696969"/>
<line x1="1990" y1="836" x2="2086" y2="836" stroke="#696969"/>
<line x1="2086" y1="836" x2="2203" y2="836" stroke="#696969"/>
<line x1="119" y1="884" x2="263" y2="884" stroke="#ffffff"/>
<line x1="263" y1="884" x2="359" y2="884" stroke="#ffffff"/>
<line x1="359" y1="884" x2="455" y2="884" stroke="#ffffff"/>
<line x1="455" y1="884" x2="551" y2="884" stroke="#ffffff"/>
<line x1="551" y1="884" x2="647" y2="884" stroke="#ffffff"/>
<line x1="647" y1="884" x2="743" y2="884" stroke="#ffffff"/>
<line x1="743" y1="884" x2="839" y2="884" stroke="#ffffff"/>
<line x1="839" y1="884" x2="935" y2="884" stroke="#ffffff"/>
<line x1="935" y1="884" x2="1031" y2="884" stroke="#ffffff"/>
<line x1="1031" y1="884" x2="1127" y2="884" stroke="#ffffff"/>
<line x1="1127" y1="884" x2="1224" y2="884" stroke="#ffffff"/>
<line x1="1224" y1="884" x2="1320" y2="884" stroke="#ffffff"/>
<line x1="1320" y1="884" x2="1416" y2="884" stroke="#ffffff"/>
<line x1="1416" y1="884" x2="1512" y2="884" stroke="#ffffff"/>
<line x1="1512" y1="884" x2="1608" y2="884" stroke="#ffffff"/>
<line x1="1608" y1="884" x2="1704" y2="884" stroke="#ffffff"/>
<line x1="1704" y1="884" x2="1800" y2="884" stroke="#ffffff"/>
<line x1="1800" y1="884" x2="1894" y2="884" stroke="#ffffff"/>
<line x1="1894" y1="884" x2="1990" y2="884" stroke="#ffffff"/>
<line x1="1990" y1="884" x2="2086" y2="884" stroke="#ffffff"/>
<line x1="2086" y1="884" x2="2203" y2="884" stroke="#ffffff"/>
<line x1="119" y1="922" x2="263" y2="922" stroke="#696969"/>
<line x1="263" y1="922" x2="359" y2="922" stroke="#696969"/>
<line x1="359" y1="922" x2="455" y2="922" stroke="#696969"/>
<line x1="455" y1="922" x2="551" y2="922" stroke="#696969"/>
<line x1="551" y1="922" x2="647" y2="922" stroke="#696969"/>
<line x1="647" y1="922" x2="743" y2="922" stroke="#696969"/>
<line x1="743" y1="922" x2="839" y2="922" stroke="#696969"/>
<line x1="839" y1="922" x2="935" y2="922" stroke="#696969"/>
<line x1="935" y1="922" x2="1031" y2="922" stroke="#696969"/>
<line x1="1031" y1="922" x2="1127" y2="922" stroke="#696969"/>
<line x1="1127" y1="922" x2="1224" y2="922" stroke="#696969"/>
<line x1="1224" y1="922" x2="1320" y2="922" stroke="#696969"/>
<line x1="1320" y1="922" x2="1416" y2="922" stroke="#696969"/>
<line x1="1416" y1="922" x2="1512" y2="922" stroke="#696969"/>
<line x1="1512" y1="922" x2="1608" y2="922" stroke="#696969"/>
<line x1="1608" y1="922" x2="1704" y2="922" stroke="#696969"/>
<line x1="1704" y1="922" x2="1800" y2="922" stroke="#696969"/>
<line x1="1800" y1="922" x2="1894" y2="922" stroke="#696969"/>
<line x1="1894" y1="922" x2="1990" y2="922" stroke="#696969"/>
<line x1="1990" y1="922" x2="2086" y2="922" stroke="#696969"/>
<line x1="2086" y1="922" x2="2203" y2="922" stroke="#696969"/>
<line x1="119" y1="948" x2="263" y2="948" stroke="#696969"/>
<line x1="263" y1="948" x2="359" y2="948" stroke="#696969"/>
<line x1="359" y1="948" x2="455" y2="948" stroke="#696969"/>
<line x1="455" y1="948" x2="551" y2="948" stroke="#696969"/>
<line x1="551" y1="948" x2="647" y2="948" stroke="#696969"/>
<line x1="647" y1="948" x2="743" y2="948" stroke="#696969"/>
<line x1="743" y1="948" x2="839" y2="948" stroke="#696969"/>
<line x1="839" y1="948" x2="935" y2="948" stroke="#696969"/>
<line x1="935" y1="948" x2="1031" y2="948" stroke="#696969"/>
<line x1="1031" y1="948" x2="1127" y2="948" stroke="#696969"/>
<line x1="1127" y1="948" x2="1224" y2="948" stroke="#696969"/>
<line x1="1224" y1="948" x2="1320" y2="948" stroke="#696969"/>
<line x1="1320" y1="948" x2="1416" y2="948" stroke="#696969"/>
<line x1="1416" y1="948" x2="1512" y2="948" stroke="#696969"/>
<line x1="1512" y1="948" x2="1608" y2="948" stroke="#696969"/>
<line x1="1608" y1="948" x2="1704" y2="948" stroke="#696969"/>
<line x1="1704" y1="948" x2="1800" y2="948" stroke="#696969"/>
<line x1="1800" y1="948" x2="1894" y2="948" stroke="#696969"/>
<line x1="1894" y1="948" x2="1990" y2="948" stroke="#696969"/>
<line x1="1990" y1="948" x2="2086" y2="948" stroke="#696969"/>
<line x1="2086" y1="948" x2="2203" y2="948" stroke="#696969"/>
<line x1="119" y1="974" x2="263" y2="974" stroke="#696969"/>
<line x1="263" y1="974" x2="359" y2="974" stroke="#696969"/>
<line x1="359" y1="974" x2="455" y2="974" stroke="#696969"/>
<line x1="455" y1="974" x2="551" y2="974" stroke="#696969"/>
<line x1="551" y1="974" x2="647" y2="974" stroke="#696969"/>
<line x1="647" y1="974" x2="743" y2="974" stroke="#696969"/>
<line x1="743" y1="974" x2="839" y2="974" stroke="#696969"/>
<line x1="839" y1="974" x2="935" y2="974" stroke="#696969"/>
<line x1="935" y1="974" x2="1031" y2="974" stroke="#696969"/>
<line x1="1031" y1="974" x2="1127" y2="974" stroke="#696969"/>
<line x1="1127" y1="974" x2="1224" y2="974" stroke="#696969"/>
<line x1="1224" y1="974" x2="1320" y2="974" stroke="#696969"/>
<line x1="1320" y1="974" x2="1416" y2="974" stroke="#696969"/>
<line x1="1416" y1="974" x2="1512" y2="974" stroke="#696969"/>
<line x1="1512" y1="974" x2="1608" y2="974" stroke="#696969"/>
<line x1="1608" y1="974" x2="1704" y2="974" stroke="#696969"/>
<line x1="1704" y1="974" x2="1800" y2="974" stroke="#696969"/>
<line x1="1800" y1="974" x2="1894" y2="974" stroke="#696969"/>
<line x1="1894" y1="974" x2="1990" y2="974" stroke="#696969"/>
<line x1="1990" y1="974" x2="2086" y2="974" stroke="#696969"/>
<line x1="2086" y1="974" x2="2203" y2="974" stroke="#696969"/>
<line x1="119" y1="1000" x2="263" y2="1000" stroke="#696969"/>
<line x1="263" y1="1000" x2="359" y2="1000" stroke="#696969"/>
<line x1="359" y1="1000" x2="455" y2="1000" stroke="#696969"/>
<line x1="455" y1="1000" x2="551" y2="1000" stroke="#696969"/>
<line x1="551" y1="1000" x2="647" y2="1000" stroke="#696969"/>
<line x1="647" y1="1000" x2="743" y2="1000" stroke="#696969"/>
<line x1="743" y1="1000" x2="839" y2="1000" stroke="#696969"/>
<line x1="839" y1="1000" x2="935" y2="1000" stroke="#696969"/>
<line x1="935" y1="1000" x2="1031" y2="1000" stroke="#696969"/>
<line x1="1031" y1="1000" x2="1127" y2="1000" stroke="#696969"/>
<line x1="1127" y1="1000" x2="1224" y2="1000" stroke="#696969"/>
<line x1="1224" y1="1000" x2="1320" y2="1000" stroke="#696969"/>
<line x1="1320" y1="1000" x2="1416" y2="1000" stroke="#696969"/>
<line x1="1416" y1="1000" x2="1512" y2="1000" stroke="#696969"/>
<line x1="1512" y1="1000" x2="1608" y2="1000" stroke="#696969"/>
<line x1="1608" y1="1000" x2="1704" y2="1000" stroke="#696969"/>
<line x1="1704" y1="1000" x2="1800" y2="1000" stroke="#696969"/>
<line x1="1800" y1="1000" x2="1894" y2="1000" stroke="#696969"/>
<line x1="1894" y1="1000" x2="1990" y2="1000" stroke="#696969"/>
<line x1="1990" y1="1000" x2="2086" y2="1000" stroke="#696969"/>
<line x1="2086" y1="1000" x2="2203" y2="1000" stroke="#696969"/>
<line x1="119" y1="1026" x2="263" y2="1026" stroke="#696969"/>
<line x1="263" y1="1026" x2="359" y2="1026" stroke="#696969"/>
<line x1="359" y1="1026" x2="455" y2="1026" stroke="#696969"/>
<line x1="455" y1="1026" x2="551" y2="1026" stroke="#696969"/>
<line x1="551" y1="1026" x2="647" y2="1026" stroke="#696969"/>
<line x1="647" y1="1026" x2="743" y2="1026" stroke="#696969"/>
<line x1="743" y1="1026" x2="839" y2="1026" stroke="#696969"/>
<line x1="839" y1="1026" x2="935" y2="1026" stroke="#696969"/>
<line x1="935" y1="1026" x2="1031" y2="1026" stroke="#696969"/>
<line x1="1031" y1="1026" x2="1127" y2="1026" stroke="#696969"/>
<line x1="1127" y1="1026" x2="1224" y2="1026" stroke="#696969"/>
<line x1="1224" y1="1026" x2="1320" y2="1026" stroke="#696969"/>
<line x1="1320" y1="1026" x2="1416" y2="1026" stroke="#696969"/>
<line x1="1416" y1="1026" x2="1512" y2="1026" stroke="#696969"/>
<line x1="1512" y1="1026" x2="1608" y2="1026" stroke="#696969"/>
<line x1="1608" y1="1026" x2="1704" y2="1026" stroke="#696969"/>
<line x1="1704" y1="1026" x2="1800" y2="1026" stroke="#696969"/>
<line x1="1800" y1="1026" x2="1894" y2="1026" stroke="#696969"/>
<line x1="1894" y1="1026" x2="1990" y2="1026" stroke="#696969"/>
<line x1="1990" y1="1026" x2="2086" y2="1026" stroke="#696969"/>
<line x1="2086" y1="1026" x2="2203" y2="1026" stroke="#696969"/>
<line x1="119" y1="1054" x2="263" y2="1054" stroke="#696969"/>
<line x1="263" y1="1054" x2="359" y2="1054" stroke="#696969"/>
<line x1="359" y1="1054" x2="455" y2="1054" stroke="#696969"/>
<line x1="455" y1="1054" x2="551" y2="1054" stroke="#696969"/>
<line x1="551" y1="1054" x2="647" y2="1054" stroke="#696969"/>
<line x1="647" y1="1054" x2="743" y2="1054" stroke="#696969"/>
<line x1="743" y1="1054" x2="839" y2="1054" stroke="#696969"/>
<line x1="839" y1="1054" x2="935" y2="1054" stroke="#696969"/>
<line x1="935" y1="1054" x2="1031" y2="1054" stroke="#696969"/>
<line x1="1031" y1="1054" x2="1127" y2="1054" stroke="#696969"/>
<line x1="1127" y1="1054" x2="1224" y2="1054" stroke="#696969"/>
<line x1="1224" y1="1054" x2="1320" y2="1054" stroke="#696969"/>
<line x1="1320" y1="1054" x2="1416" y2="1054" stroke="#696969"/>
<line x1="1416" y1="1054" x2="1512" y2="1054" stroke="#696969"/>
<line x1="1512" y1="1054" x2="1608" y2="1054" stroke="#696969"/>
<line x1="1608" y1="1054" x2="1704" y2="1054" stroke="#696969"/>
<line x1="1704" y1="1054" x2="1800" y2="1054" stroke="#696969"/>
<line x1="1800" y1="1054" x2="1894" y2="1054" stroke="#696969"/>
<line x1="1894" y1="1054" x2="1990" y2="1054" stroke="#696969"/>
<line x1="1990" y1="1054" x2="2086" y2="1054" stroke="#696969"/>
<line x1="2086" y1="1054" x2="2203" y2="1054" stroke="#696969"/>
<line x1="119" y1="1080" x2="263" y2="1080" stroke="#696969"/>
<line x1="263" y1="1080" x2="359" y2="1080" stroke="#696969"/>
<line x1="359" y1="1080" x2="455" y2="1080" stroke="#696969"/>
<line x1="455" y1="1080" x2="551" y2="1080" stroke="#696969"/>
<line x1="551" y1="1080" x2="647" y2="1080" stroke="#696969"/>
<line x1="647" y1="1080" x2="743" y2="1080" stroke="#696969"/>
<line x1="743" y1="1080" x2="839" y2="1080" stroke="#696969"/>
<line x1="839" y1="1080" x2="935" y2="1080" stroke="#696969"/>
<line x1="935" y1="1080" x2="1031" y2="1080" stroke="#696969"/>
<line x1="1031" y1="1080" x2="1127" y2="1080" stroke="#696969"/>
<line x1="1127" y1="1080" x2="1224" y2="1080" stroke="#696969"/>
<line x1="1224" y1="1080" x2="1320" y2="1080" stroke="#696969"/>
<line x1="1320" y1="1080" x2="1416" y2="1080" stroke="#696969"/>
<line x1="1416" y1="1080" x2="1512" y2="1080" stroke="#696969"/>
<line x1="1512" y1="1080" x2="1608" y2="1080" stroke="#696969"/>
<line x1="1608" y1="1080" x2="1704" y2="1080" stroke="#696969"/>
<line x1="1704" y1="1080" x2="1800" y2="1080" stroke="#696969"/>
<line x1="1800" y1="1080" x2="1894" y2="1080" stroke="#696969"/>
<line x1="1894" y1="1080" x2="1990" y2="1080" stroke="#696969"/>
<line x1="1990" y1="1080" x2="2086" y2="1080" stroke="#696969"/>
<line x1="2086" y1="1080" x2="2203" y2="1080" stroke="#696969"/>
<line x1="119" y1="1106" x2="263" y2="1106" stroke="#696969"/>
<line x1="263" y1="1106" x2="359" y2="1106" stroke="#696969"/>
<line x1="359" y1="1106" x2="455" y2="1106" stroke="#696969"/>
<line x1="455" y1="1106" x2="551" y2="1106" stroke="#696969"/>
<line x1="551" y1="1106" x2="647" y2="1106" stroke="#696969"/>
<line x1="647" y1="1106" x2="743" y2="1106" stroke="#696969"/>
<line x1="743" y1="1106" x2="839" y2="1106" stroke="#696969"/>
<line x1="839" y1="1106" x2="935" y2="1106" stroke="#696969"/>
<line x1="935" y1="1106" x2="1031" y2="1106" stroke="#696969"/>
<line x1="1031" y1="1106" x2="1127" y2="1106" stroke="#696969"/>
<line x1="1127" y1="1106" x2="1224" y2="1106" stroke="#696969"/>
<line x1="1224" y1="1106" x2="1320" y2="1106" stroke="#696969"/>
<line x1="1320" y1="1106" x2="1416" y2="1106" stroke="#696969"/>
<line x1="1416" y1="1106" x2="1512" y2="1106" stroke="#696969"/>
<line x1="1512" y1="1106" x2="1608" y2="1106" stroke="#696969"/>
<line x1="1608" y1="1106" x2="1704" y2="1106" stroke="#696969"/>
<line x1="1704" y1="1106" x2="1800" y2="1106" stroke="#696969"/>
<line x1="1800" y1="1106" x2="1894" y2="1106" stroke="#696969"/>
<line x1="1894" y1="1106" x2="1990" y2="1106" stroke="#696969"/>
<line x1="1990" y1="1106" x2="2086" y2="1106" stroke="#696969"/>
<line x1="2086" y1="1106" x2="2203" y2="1106" stroke="#696969"/>
<line x1="119" y1="1132" x2="263" y2="1132" stroke="#696969"/>
<line x1="263" y1="1132" x2="359" y2="1132" stroke="#696969"/>
<line x1="359" y1="1132" x2="455" y2="1132" stroke="#696969"/>
<line x1="455" y1="1132" x2="551" y2="1132" stroke="#696969"/>
<line x1="551" y1="1132" x2="647" y2="1132" stroke="#696969"/>
<line x1="647" y1="1132" x2="743" y2="1132" stroke="#696969"/>
<line x1="743" y1="1132" x2="839" y2="1132" stroke="#696969"/>
<line x1="839" y1="1132" x2="935" y2="1132" stroke="#696969"/>
<line x1="935" y1="1132" x2="1031" y2="1132" stroke="#696969"/>
<line x1="1031" y1="1132" x2="1127" y2="1132" stroke="#696969"/>
<line x1="1127" y1="1132" x2="1224" y2="1132" stroke="#696969"/>
<line x1="1224" y1="1132" x2="1320" y2="1132" stroke="#696969"/>
<line x1="1320" y1="1132" x2="1416" y2="1132" stroke="#696969"/>
<line x1="1416" y1="1132" x2="1512" y2="1132" stroke="#696969"/>
<line x1="1512" y1="1132" x2="1608" y2="1132" stroke="#696969"/>
<line x1="1608" y1="1132" x2="1704" y2="1132" stroke="#696969"/>
<line x1="1704" y1="1132" x2="1800" y2="1132" stroke="#696969"/>
<line x1="1800" y1="1132" x2="1894" y2="1132" stroke="#696969"/>
<line x1="1894" y1="1132" x2="1990" y2="1132" stroke="#696969"/>
<line x1="1990" y1="1132" x2="2086" y2="1132" stroke="#696969"/>
<line x1="2086" y1="1132" x2="2203" y2="1132" stroke="#696969"/>
<line x1="119" y1="1158" x2="263" y2="1158" stroke="#ffffff"/>
<line x1="263" y1="1158" x2="359" y2="1158" stroke="#ffffff"/>
<line x1="359" y1="1158" x2="455" y2="1158" stroke="#ffffff"/>
<line x1="455" y1="1158" x2="551" y2="1158" stroke="#ffffff"/>
<line x1="551" y1="1158" x2="647" y2="1158" stroke="#ffffff"/>
<line x1="647" y1="1158" x2="743" y2="1158" stroke="#ffffff"/>
<line x1="743" y1="1158" x2="839" y2="1158" stroke="#ffffff"/>
<line x1="839" y1="1158" x2="935" y2="1158" stroke="#ffffff"/>
<line x1="935" y1="1158" x2="1031" y2="1158" stroke="#ffffff"/>
<line x1="1031" y1="1158" x2="1127" y2="1158" stroke="#ffffff"/>
<line x1="1127" y1="1158" x2="1224" y2="1158" stroke="#ffffff"/>
<line x1="1224" y1="1158" x2="1320" y2="1158" stroke="#ffffff"/>
<line x1="1320" y1="1158" x2="1416" y2="1158" stroke="#ffffff"/>
<line x1="1416" y1="1158" x2="1512" y2="1158" stroke="#ffffff"/>
<line x1="1512" y1="1158" x2="1608" y2="1158" stroke="#ffffff"/>
<line x1="1608" y1="1158" x2="1704" y2="1158" stroke="#ffffff"/>
<line x1="1704" y1="1158" x2="1800" y2="1158" stroke="#ffffff"/>
<line x1="1800" y1="1158" x2="1894" y2="1158" stroke="#ffffff"/>
<line x1="1894" y1="1158" x2="1990" y2="1158" stroke="#ffffff"/>
<line x1="1990" y1="1158" x2="2086" y2="1158" stroke="#ffffff"/>
<line x1="2086" y1="1158" x2="2203" y2="1158" stroke="#ffffff"/>
<line x1="119" y1="1194" x2="263" y2="1194" stroke="#696969"/>
<line x1="263" y1="1194" x2="359" y2="1194" stroke="#696969"/>
<line x1="359" y1="1194" x2="455" y2="1194" stroke="#696969"/>
<line x1="455" y1="1194" x2="551" y2="1194" stroke="#696969"/>
<line x1="551" y1="1194" x2="647" y2="1194" stroke="#696969"/>
<line x1="647" y1="1194" x2="743" y2="1194" stroke="#696969"/>
<line x1="743" y1="1194" x2="839" y2="1194" stroke="#696969"/>
<line x1="839" y1="1194" x2="935" y2="1194" stroke="#696969"/>
<line x1="935" y1="1194" x2="1031" y2="1194" stroke="#696969"/>
<line x1="1031" y1="1194" x2="1127" y2="1194" stroke="#696969"/>
<line x1="1127" y1="1194" x2="1224" y2="1194" stroke="#696969"/>
<line x1="1224" y1="1194" x2="1320" y2="1194" stroke="#696969"/>
<line x1="1320" y1="1194" x2="1416" y2="1194" stroke="#696969"/>
<line x1="1416" y1="1194" x2="1512" y2="1194" stroke="#696969"/>
<line x1="1512" y1="1194" x2="1608" y2="1194" stroke="#696969"/>
<line x1="1608" y1="1194" x2="1704" y2="1194" stroke="#696969"/>
<line x1="1704" y1="1194" x2="1800" y2="1194" stroke="#696969"/>
<line x1="1800" y1="1194" x2="1894" y2="1194" stroke="#696969"/>
<line x1="1894" y1="1194" x2="1990" y2="1194" stroke="#696969"/>
<line x1="1990" y1="1194" x2="2086" y2="1194" stroke="#696969"/>
<line x1="2086" y1="1194" x2="2203" y2="1194" stroke="#696969"/>
<line x1="119" y1="1234" x2="263" y2="1234" stroke="#696969"/>
<line x1="263" y1="1234" x2="359" y2="1234" stroke="#696969"/>
<line x1="359" y1="1234" x2="455" y2="1234" stroke="#696969"/>
<line x1="455" y1="1234" x2="551" y2="1234" stroke="#696969"/>
<line x1="551" y1="1234" x2="647" y2="1234" stroke="#696969"/>
<line x1="647" y1="1234" x2="743" y2="1234" stroke="#696969"/>
<line x1="743" y1="1234" x2="839" y2="1234" stroke="#696969"/>
<line x1="839" y1="1234" x2="935" y2="1234" stroke="#696969"/>
<line x1="935" y1="1234" x2="1031" y2="1234" stroke="#696969"/>
<line x1="1031" y1="1234" x2="1127" y2="1234" stroke="#696969"/>
<line x1="1127" y1="1234" x2="1224" y2="1234" stroke="#696969"/>
<line x1="1224" y1="1234" x2="1320" y2="1234" stroke="#696969"/>
<line x1="1320" y1="1234" x2="1416" y2="1234" stroke="#696969"/>
<line x1="1416" y1="1234" x2="1512" y2="1234" stroke="#696969"/>
<line x1="1512" y1="1234" x2="1608" y2="1234" stroke="#696969"/>
<line x1="1608" y1="1234" x2="1704" y2="1234" stroke="#696969"/>
<line x1="1704" y1="1234" x2="1800" y2="1234" stroke="#696969"/>
<line x1="1800" y1="1234" x2="1894" y2="1234" stroke="#696969"/>
<line x1="1894" y1="1234" x2="1990" y2="1234" stroke="#696969"/>
<line x1="1990" y1="1234" x2="2086" y2="1234" stroke="#696969"/>
<line x1="2086" y1="1234" x2="2203" y2="1234" stroke="#696969"/>
<line x1="119" y1="1274" x2="263" y2="1274" stroke="#696969"/>
<line x1="263" y1="1274" x2="359" y2="1274" stroke="#696969"/>
<line x1="359" y1="1274" x2="455" y2="1274" stroke="#696969"/>
<line x1="455" y1="1274" x2="551" y2="1274" stroke="#696969"/>
<line x1="551" y1="1274" x2="647" y2="1274" stroke="#696969"/>
<line x1="647" y1="1274" x2="743" y2="1274" stroke="#696969"/>
<line x1="743" y1="1274" x2="839" y2="1274" stroke="#696969"/>
<line x1="839" y1="1274" x2="935" y2="1274" stroke="#696969"/>
<line x1="935" y1="1274" x2="1031" y2="1274" stroke="#696969"/>
<line x1="1031" y1="1274" x2="1127" y2="1274" stroke="#696969"/>
<line x1="1127" y1="1274" x2="1224" y2="1274" stroke="#696969"/>
<line x1="1224" y1="1274" x2="1320" y2="1274" stroke="#696969"/>
<line x1="1320" y1="1274" x2="1416" y2="1274" stroke="#696969"/>
<line x1="1416" y1="1274" x2="1512" y2="1274" stroke="#696969"/>
<line x1="1512" y1="1274" x2="1608" y2="1274" stroke="#696969"/>
<line x1="1608" y1="1274" x2="1704" y2="1274" stroke="#696969"/>
<line x1="1704" y1="1274" x2="1800" y2="1274" stroke="#696969"/>
<line x1="1800" y1="1274" x2="1894" y2="1274" stroke="#696969"/>
<line x1="1894" y1="1274" x2="1990" y2="1274" stroke="#696969"/>
<line x1="1990" y1="1274" x2="2086" y2="1274" stroke="#696969"/>
<line x1="2086" y1="1274" x2="2203" y2="1274" stroke="#696969"/>
<line x1="119" y1="1314" x2="263" y2="1314" stroke="#696969"/>
<line x1="263" y1="1314" x2="359" y2="1314" stroke="#696969"/>
<line x1="359" y1="1314" x2="455" y2="1314" stroke="#696969"/>
<line x1="455" y1="1314" x2="551" y2="1314" stroke="#696969"/>
<line x1="551" y1="1314" x2="647" y2="1314" stroke="#696969"/>
<line x1="647" y1="1314" x2="743" y2="1314" stroke="#696969"/>
<line x1="743" y1="1314" x2="839" y2="1314" stroke="#696969"/>
<line x1="839" y1="1314" x2="935" y2="1314" stroke="#696969"/>
<line x1="935" y1="1314" x2="1031" y2="1314" stroke="#696969"/>
<line x1="1031" y1="1314" x2="1127" y2="1314" stroke="#696969"/>
<line x1="1127" y1="1314" x2="1224" y2="1314" stroke="#696969"/>
<line x1="1224" y1="1314" x2="1320" y2="1314" stroke="#696969"/>
<line x1="1320" y1="1314" x2="1416" y2="1314" stroke="#696969"/>
<line x1="1416" y1="1314" x2="1512" y2="1314" stroke="#696969"/>
<line x1="1512" y1="1314" x2="1608" y2="1314" stroke="#696969"/>
<line x1="1608" y1="1314" x2="1704" y2="1314" stroke="#696969"/>
<line x1="1704" y1="1314" x2="1800" y2="1314" stroke="#696969"/>
<line x1="1800" y1="1314" x2="1894" y2="1314" stroke="#696969"/>
<line x1="1894" y1="1314" x2="1990" y2="1314" stroke="#696969"/>
<line x1="1990" y1="1314" x2="2086" y2="1314" stroke="#696969"/>
<line x1="2086" y1="1314" x2="2203" y2="1314" stroke="#696969"/>
<line x1="119" y1="1352" x2="263" y2="1352" stroke="#696969"/>
<line x1="263" y1="1352" x2="359" y2="1352" stroke="#696969"/>
<line x1="359" y1="1352" x2="455" y2="1352" stroke="#696969"/>
<line x1="455" y1="1352" x2="551" y2="1352" stroke="#696969"/>
<line x1="551" y1="1352" x2="647" y2="1352" stroke="#696969"/>
<line x1="647" y1="1352" x2="743" y2="1352" stroke="#696969"/>
<line x1="743" y1="1352" x2="839" y2="1352" stroke="#696969"/>
<line x1="839" y1="1352" x2="935" y2="1352" stroke="#696969"/>
<line x1="935" y1="1352" x2="1031" y2="1352" stroke="#696969"/>
<line x1="1031" y1="1352" x2="1127" y2="1352" stroke="#696969"/>
<line x1="1127" y1="1352" x2="1224" y2="1352" stroke="#696969"/>
<line x1="1224" y1="1352" x2="1320" y2="1352" stroke="#696969"/>
<line x1="1320" y1="1352" x2="1416" y2="1352" stroke="#696969"/>
<line x1="1416" y1="1352" x2="1512" y2="1352" stroke="#696969"/>
<line x1="1512" y1="1352" x2="1608" y2="1352" stroke="#696969"/>
<line x1="1608" y1="1352" x2="1704" y2="1352" stroke="#696969"/>
<line x1="1704" y1="1352" x2="1800" y2="1352" stroke="#696969"/>
<line x1="1800" y1="1352" x2="1894" y2="1352" stroke="#696969"/>
<line x1="1894" y1="1352" x2="1990" y2="1352" stroke="#696969"/>
<line x1="1990" y1="1352" x2="2086" y2="1352" stroke="#696969"/>
<line x1="2086" y1="1352" x2="2203" y2="1352" stroke="#696969"/>
<line x1="119" y1="1392" x2="263" y2="1392" stroke="#696969"/>
<line x1="263" y1="1392" x2="359" y2="1392" stroke="#696969"/>
<line x1="359" y1="1392" x2="455" y2="1392" stroke="#696969"/>
<line x1="455" y1="1392" x2="551" y2="1392" stroke="#696969"/>
<line x1="551" y1="1392" x2="647" y2="1392" stroke="#696969"/>
<line x1="647" y1="1392" x2="743" y2="1392" stroke="#696969"/>
<line x1="743" y1="1392" x2="839" y2="1392" stroke="#696969"/>
<line x1="839" y1="1392" x2="935" y2="1392" stroke="#696969"/>
<line x1="935" y1="1392" x2="1031" y2="1392" stroke="#696969"/>
<line x1="1031" y1="1392" x2="1127" y2="1392" stroke="#696969"/>
<line x1="1127" y1="1392" x2="1224" y2="1392" stroke="#696969"/>
<line x1="1224" y1="1392" x2="1320" y2="1392" stroke="#696969"/>
<line x1="1320" y1="1392" x2="1416" y2="1392" stroke="#696969"/>
<line x1="1416" y1="1392" x2="1512" y2="1392" stroke="#696969"/>
<line x1="1512" y1="1392" x2="1608" y2="1392" stroke="#696969"/>
<line x1="1608" y1="1392" x2="1704" y2="1392" stroke="#696969"/>
<line x1="1704" y1="1392" x2="1800" y2="1392" stroke="#696969"/>
<line x1="1800" y1="1392" x2="1894" y2="1392" stroke="#696969"/>
<line x1="1894" y1="1392" x2="1990" y2="1392" stroke="#696969"/>
<line x1="1990" y1="1392" x2="2086" y2="1392" stroke="#696969"/>
<line x1="2086" y1="1392" x2="2203" y2="1392" stroke="#696969"/>
<line x1="119" y1="1432" x2="263" y2="1432" stroke="#696969"/>
<line x1="263" y1="1432" x2="359" y2="1432" stroke="#696969"/>
<line x1="359" y1="1432" x2="455" y2="1432" stroke="#696969"/>
<line x1="455" y1="1432" x2="551" y2="1432" stroke="#696969"/>
<line x1="551" y1="1432" x2="647" y2="1432" stroke="#696969"/>
<line x1="647" y1="1432" x2="743" y2="1432" stroke="#696969"/>
<line x1="743" y1="1432" x2="839" y2="1432" stroke="#696969"/>
<line x1="839" y1="1432" x2="935" y2="1432" stroke="#696969"/>
<line x1="935" y1="1432" x2="1031" y2="1432" stroke="#696969"/>
<line x1="1031" y1="1432" x2="1127" y2="1432" stroke="#696969"/>
<line x1="1127" y1="1432" x2="1224" y2="1432" stroke="#696969"/>
<line x1="1224" y1="1432" x2="1320" y2="1432" stroke="#696969"/>
<line x1="1320" y1="1432" x2="1416" y2="1432" stroke="#696969"/>
<line x1="1416" y1="1432" x2="1512" y2="1432" stroke="#696969"/>
<line x1="1512" y1="1432" x2="1608" y2="1432" stroke="#696969"/>
<line x1="1608" y1="1432" x2="1704" y2="1432" stroke="#696969"/>
<line x1="1704" y1="1432" x2="1800" y2="1432" stroke="#696969"/>
<line x1="1800" y1="1432" x2="1894" y2="1432" stroke="#696969"/>
<line x1="1894" y1="1432" x2="1990" y2="1432" stroke="#696969"/>
<line x1="1990" y1="1432" x2="2086" y2="1432" stroke="#696969"/>
<line x1="2086" y1="1432" x2="2203" y2="1432" stroke="#696969"/>
</g>
<g fill="none" stroke-width="2" stroke-linejoin="miter" stroke-linecap="square" shape-rendering="crispEdges">
<polyline points="117.0,248.0 148.0,250.0 185.0,252.0 217.0,254.0 251.0,256.0 264.0,258.0 278.0,286.0 280.0,287.0 281.7,273.0 282.6,256.0 284.4,232.0 286.2,228.5 288.0,233.0 311.0,240.0 359.0,266.0 377.0,276.0 403.6,288.0 414.3,292.5 425.8,292.5 437.4,285.4 442.7,287.2 458.8,289.9 469.4,287.2 480.1,289.9 486.3,289.0 492.6,279.2 496.1,279.2 501.5,287.2 503.6,290.7 514.2,294.7 532.9,294.7 544.5,286.8 557.8,286.8 561.4,290.7 572.1,291.1 581.9,298.8 592.5,300.5 594.3,298.8 612.1,302.3 621.0,301.4 629.9,297.0 650.4,297.0 661.9,297.0 670.8,298.8 683.3,304.6 692.2,304.6 706.4,298.8 716.2,298.8 733.1,302.3 749.1,306.8 760.7,306.8 763.3,305.0 813.2,302.3 825.6,297.0 846.1,297.0 859.4,302.3 873.7,306.8 884.3,305.9 900.0,304.6 911.4,305.0 912.2,306.8 925.6,306.8 928.3,289.0 934.5,271.2 938.0,271.2 942.5,289.0 948.7,299.6 956.7,321.0 960.3,308.5 964.7,306.8 973.6,281.0 982.5,265.0 991.4,255.2 996.8,262.3 1007.4,290.7 1014.6,297.0 1019.0,296.1 1027.0,267.6 1029.7,266.7 1037.7,285.4 1040.4,276.5 1048.4,282.7 1055.5,282.7 1059.0,274.7 1062.6,275.6 1065.3,289.0 1067.9,281.0 1076.8,274.7 1085.7,262.3 1094.6,252.5 1100.0,250.7 1104.4,251.6 1110.6,267.6 1117.8,290.7 1124.9,297.0 1132.0,296.1 1139.1,273.0 1149.8,261.4 1153.3,264.0 1164.0,257.8 1178.3,247.7 1196.0,247.2 1219.2,256.9 1229.9,257.8 1245.9,253.4 1263.7,248.0 1272.6,242.7 1280.0,238.1 1290.0,226.3 1319.1,183.0 1333.4,153.6 1348.5,115.4 1350.3,130.5 1351.2,144.7 1361.8,191.0 1362.7,192.8 1365.4,176.7 1368.1,170.5 1369.9,176.7 1370.7,189.2 1372.5,181.2 1377.0,178.5 1418.8,124.3 1422.3,120.7 1426.8,114.5 1428.6,100.2 1429.5,110.9 1432.1,114.5 1433.0,128.7 1435.7,144.7 1443.7,182.1 1447.3,179.4 1457.9,182.1 1475.7,191.0 1511.3,202.5 1546.9,211.4 1582.5,217.7 1609.2,221.2 1627.0,223.9 1667.0,224.8 1669.7,228.4 1676.0,253.4 1680.5,268.5 1684.0,268.5 1685.8,255.2 1695.6,254.3 1704.5,256.0 1745.4,254.3 1784.6,251.6 1900.0,251.7 2010.3,252.8 2204.0,253.1" stroke="#3399ff"/>
<polyline points="117.1,588.3 123.3,598.1 143.8,598.1 148.3,592.8 170.5,592.8 175.8,586.5 211.4,586.5 225.7,585.3 234.6,590.6 264.8,590.6 277.3,577.7 278.1,556.3 279.4,526.6 282.2,527.8 282.6,551.9 284.0,551.9 285.8,582.1 287.9,594.6 291.5,600.8 318.2,600.8 321.7,596.7 341.3,591.0 353.8,588.3 364.4,586.5 371.6,588.9 384.0,584.8 394.7,587.1 412.5,581.7 419.6,574.1 432.1,575.0 439.2,578.5 467.7,576.8 483.7,578.5 485.4,568.8 490.8,568.8 494.3,582.1 499.7,584.8 505.3,584.8 507.1,582.5 513.3,582.5 519.6,576.8 533.8,576.8 535.6,574.6 544.5,574.6 548.0,578.5 562.3,578.5 571.2,574.6 576.5,578.5 587.2,578.5 594.3,575.0 613.9,575.0 615.7,572.8 622.8,572.8 624.6,575.0 632.6,575.0 633.5,576.8 677.9,576.8 685.0,571.1 700.2,571.1 702.0,572.8 708.2,572.8 710.0,575.0 727.8,575.0 729.5,576.8 743.8,576.8 747.3,573.2 753.6,571.1 774.0,571.1 774.9,572.8 790.9,572.8 792.7,575.0 804.3,575.0 809.6,569.3 818.5,569.3 820.3,571.1 827.4,572.8 832.7,575.0 848.8,575.0 852.3,578.5 859.4,578.5 863.0,576.8 868.3,575.0 873.7,572.8 880.8,571.1 891.5,571.1 893.2,572.8 903.3,572.8 904.2,571.1 914.0,569.6 921.1,567.9 923.8,551.9 926.5,545.6 930.0,551.9 934.5,566.1 938.0,574.1 943.4,567.9 946.9,560.7 951.4,537.6 954.9,518.0 960.3,505.6 965.6,505.6 968.3,508.3 973.6,509.1 977.2,514.5 979.0,526.9 983.4,538.5 986.1,555.4 989.6,575.0 995.0,591.0 999.4,591.0 1005.7,584.8 1014.6,579.4 1018.1,551.9 1021.7,551.9 1027.0,573.2 1032.3,586.5 1035.9,575.0 1036.8,556.3 1038.6,543.0 1043.0,546.5 1046.6,528.7 1050.1,525.2 1051.9,528.7 1055.5,550.1 1059.9,564.3 1062.6,548.3 1065.3,523.4 1067.0,514.5 1068.8,502.9 1076.8,510.0 1091.1,510.9 1094.6,530.5 1097.3,559.0 1100.0,576.8 1105.3,591.9 1112.4,591.9 1116.0,585.7 1128.4,575.9 1133.8,559.0 1142.7,576.8 1149.8,582.1 1152.5,578.5 1155.1,560.7 1158.7,544.7 1165.8,536.7 1172.9,534.9 1179.1,537.6 1183.6,564.3 1188.9,582.1 1204.9,594.6 1217.4,592.8 1224.5,578.5 1235.2,559.9 1242.3,559.9 1251.2,564.3 1260.1,564.3 1263.7,551.9 1269.0,548.3 1272.6,523.4 1276.1,523.4 1280.0,526.7 1287.1,525.3 1288.0,509.2 1297.8,505.7 1308.5,486.1 1320.9,479.0 1322.7,454.1 1328.9,436.3 1333.4,435.4 1341.4,440.7 1344.9,433.6 1348.5,438.1 1349.4,524.4 1351.2,596.4 1358.3,606.2 1362.7,606.2 1363.6,565.3 1367.2,482.6 1371.6,461.2 1374.3,441.6 1378.8,414.9 1381.4,411.0 1422.3,411.0 1428.6,414.9 1429.1,521.7 1431.2,523.5 1431.2,605.3 1433.0,608.9 1441.0,608.9 1444.6,603.6 1454.4,608.0 1475.7,608.0 1493.5,605.3 1550.5,605.3 1555.8,589.3 1561.1,586.6 1566.5,587.2 1571.8,598.2 1582.5,603.6 1591.4,602.7 1595.8,576.9 1607.4,576.9 1612.7,594.7 1621.6,602.7 1628.8,594.7 1634.1,571.5 1643.0,576.0 1657.2,574.2 1661.7,559.1 1665.2,587.5 1674.2,598.5 1677.8,598.1 1683.1,577.7 1685.8,577.7 1693.8,595.4 1701.8,595.4 1710.7,571.4 1716.9,546.5 1719.6,543.0 1728.5,543.0 1731.2,546.5 1736.5,546.5 1741.0,534.9 1745.4,534.9 1752.5,550.1 1761.4,552.7 1768.5,567.9 1776.5,568.8 1782.8,582.1 1788.1,560.7 1794.3,551.0 1802.3,553.6 1807.7,559.0 1813.0,570.5 1825.5,571.1 1829.0,580.3 1851.3,580.3 1855.7,575.0 1869.1,575.0 1870.0,576.8 1893.1,576.4 1902.8,572.8 1920.7,572.8 1922.8,569.0 1935.2,569.0 1938.6,572.8 1971.0,572.8 1971.7,571.0 2007.6,571.0 2012.4,567.0 2057.2,564.9 2106.9,562.8 2180.0,562.8 2181.4,552.5 2186.2,547.0 2195.2,547.0 2197.2,541.0 2204.1,541.0" stroke="#808000"/>
<polyline points="117.0,497.0 966.5,497.0 973.6,493.0 986.1,493.0 989.6,497.0 1037.7,497.0 1039.5,495.0 1067.9,495.0 1073.3,491.0 1084.0,488.7 1091.1,486.9 1096.4,488.7 1101.7,497.0 1153.3,497.0 1158.7,492.8 1181.8,491.0 1185.4,497.0 1233.4,495.8 1261.9,494.9 1270.8,487.8 1276.1,485.1 1280.0,484.7 1287.1,484.7 1290.7,475.4 1304.9,463.0 1318.3,439.9 1322.7,416.7 1329.8,405.7 1347.6,389.1 1348.5,408.7 1351.2,459.4 1356.5,487.9 1361.9,495.9 1365.4,495.9 1368.1,434.5 1376.1,401.6 1386.8,400.7 1404.6,384.7 1411.7,375.8 1422.3,374.9 1427.7,374.0 1430.4,395.4 1432.1,447.0 1436.6,486.1 1440.1,493.2 1452.6,495.0 1662.6,495.0 1664.4,491.1 1666.0,495.0 1718.7,495.0 1720.0,492.8 1741.9,491.0 1763.2,492.8 1765.0,495.0 1790.0,495.0 1791.7,492.8 1807.7,492.8 1809.0,495.0 2181.0,495.0 2182.0,492.8 2204.0,492.8" stroke="#ffffff"/>
<polyline points="117.0,693.0 273.9,693.0 273.9,645.0 285.7,645.0 285.7,741.0 429.8,741.0 429.8,788.0 449.9,788.0 449.9,836.0 533.7,836.0 533.7,884.0 960.0,884.0 960.0,836.0 1008.1,836.0 1008.1,788.0 1025.4,788.0 1025.4,836.0 1051.6,836.0 1051.6,788.0 1114.0,788.0 1114.0,741.0 1121.5,741.0 1121.5,693.0 1136.7,693.0 1136.7,741.0 1146.9,741.0 1146.9,788.0 1360.0,788.0 1360.0,741.0 1441.0,741.0 1441.0,693.0 1675.0,693.0 1675.0,645.0 2204.0,645.0 2204.0,645.0" stroke="#b4b4b4" shape-rendering="crispEdges"/>
<polyline points="117.1,1145.8 119.8,1145.8 119.8,1149.8 142.0,1149.8 143.8,1145.8 171.4,1145.8 172.3,1143.7 227.4,1143.7 229.2,1145.8 235.4,1145.8 236.3,1148.0 262.1,1148.0 263.0,1145.8 276.9,1145.8 278.1,1119.5 280.5,1119.5 280.8,1137.3 281.7,1143.2 286.2,1144.1 290.6,1146.7 291.5,1149.8 316.4,1149.8 316.4,1147.6 368.9,1147.6 369.8,1149.8 414.3,1149.8 414.3,1147.6 482.8,1147.6 483.7,1143.7 488.1,1143.7 491.7,1149.8 532.0,1149.8 532.0,1147.6 573.8,1147.6 573.8,1149.8 725.1,1149.8 725.1,1151.7 803.4,1151.7 803.4,1149.8 847.9,1149.8 847.9,1151.7 920.2,1151.7 921.7,1141.9 933.6,1141.9 935.9,1144.1 945.2,1143.2 952.3,1137.8 957.6,1136.9 958.5,1126.3 964.7,1122.7 971.9,1113.5 975.8,1113.5 977.2,1125.4 983.4,1129.8 984.3,1141.4 993.2,1149.4 1016.3,1149.8 1017.8,1133.4 1019.0,1141.4 1030.6,1149.8 1033.2,1149.8 1035.9,1129.8 1039.5,1135.2 1044.8,1127.2 1049.8,1125.9 1051.9,1141.9 1060.8,1141.9 1063.5,1120.9 1067.0,1112.0 1067.9,1097.8 1069.7,1097.8 1071.5,1109.9 1075.9,1108.1 1084.0,1106.3 1090.2,1106.3 1092.8,1120.9 1096.4,1143.2 1103.5,1149.4 1128.4,1149.8 1129.3,1141.9 1133.8,1141.9 1135.6,1143.7 1149.8,1142.3 1155.1,1126.3 1162.2,1122.7 1170.2,1120.0 1179.1,1120.0 1182.7,1135.2 1187.2,1141.9 1196.0,1144.1 1200.5,1147.6 1213.8,1147.6 1224.5,1137.8 1231.6,1137.3 1233.4,1131.6 1243.2,1133.4 1259.2,1133.4 1261.0,1125.9 1267.2,1122.7 1269.0,1107.6 1280.6,1109.9 1284.4,1109.7 1287.0,1093.0 1296.6,1087.8 1306.3,1081.6 1310.6,1086.9 1321.2,1085.1 1322.0,1067.6 1326.9,1065.0 1327.3,1051.9 1339.5,1051.9 1343.0,1044.0 1347.4,1044.0 1349.2,1051.9 1349.2,1144.7 1357.1,1146.4 1361.4,1149.1 1363.2,1079.9 1365.8,999.3 1369.3,999.3 1371.9,992.3 1372.8,953.8 1375.4,945.0 1377.2,931.0 1379.8,925.8 1385.1,925.8 1388.6,933.6 1390.3,952.0 1400.8,942.4 1407.8,943.3 1416.6,947.7 1419.2,935.4 1425.4,943.3 1425.4,1008.1 1427.1,992.3 1428.9,1003.7 1428.9,1153.4 1430.6,1149.1 1441.1,1149.1 1444.6,1143.8 1449.9,1144.7 1453.4,1149.1 1472.6,1149.1 1474.4,1147.3 1548.3,1147.6 1551.0,1141.9 1555.4,1137.8 1559.0,1136.0 1567.0,1136.0 1567.9,1142.3 1573.2,1144.9 1576.8,1149.8 1591.0,1149.8 1592.8,1131.6 1598.1,1129.8 1608.8,1131.6 1609.7,1141.9 1619.5,1149.8 1623.0,1149.8 1624.8,1144.9 1628.4,1141.9 1631.0,1127.7 1634.6,1127.7 1636.4,1131.6 1655.9,1131.6 1657.7,1125.4 1661.3,1121.8 1663.1,1143.2 1667.5,1144.9 1672.8,1149.8 1677.3,1149.8 1679.1,1140.5 1683.5,1143.2 1690.6,1149.8 1701.3,1149.8 1703.1,1143.2 1709.3,1136.0 1714.7,1133.4 1715.6,1123.6 1727.1,1123.6 1728.9,1127.7 1736.0,1127.7 1736.9,1119.5 1742.2,1119.5 1748.5,1127.7 1759.1,1127.7 1764.5,1135.5 1776.9,1135.5 1776.9,1141.9 1782.3,1141.9 1784.1,1131.6 1788.5,1127.7 1799.2,1127.7 1808.1,1131.6 1809.0,1136.0 1823.2,1136.0 1825.0,1141.9 1847.2,1141.9 1850.8,1137.8 1868.6,1137.9 1868.6,1139.9 1884.9,1139.9 1884.9,1137.9 1919.2,1137.9 1919.2,1135.7 1937.1,1135.7 1937.1,1137.9 1959.6,1137.9 1959.6,1135.7 2009.5,1135.7 2009.5,1133.7 2025.0,1133.7 2025.0,1135.7 2051.5,1135.7 2051.5,1133.7 2179.2,1133.7 2180.0,1126.7 2194.7,1125.9 2197.1,1122.0 2201.0,1122.0 2204.0,1124.4" stroke="#00ff00"/>
<polyline points="117.0,1360.0 199.0,1360.0 199.0,1361.8 499.2,1361.8 499.2,1360.0 600.0,1359.6 618.7,1359.6 618.7,1357.7 705.9,1357.7 705.9,1355.8 774.4,1355.8 774.4,1353.6 839.8,1353.6 839.8,1351.5 962.8,1351.5 962.8,1349.9 1071.8,1349.9 1071.8,1347.7 1085.8,1345.5 1098.3,1343.7 1104.5,1345.5 1117.0,1347.7 1179.3,1345.5 1188.6,1347.7 1280.5,1347.7 1294.1,1343.8 1309.9,1329.7 1320.4,1312.2 1332.8,1271.7 1341.5,1254.1 1351.2,1238.3 1354.7,1240.1 1371.4,1286.7 1375.8,1284.9 1387.3,1252.4 1403.1,1227.8 1420.7,1211.9 1431.2,1204.0 1434.7,1207.5 1445.3,1241.8 1457.6,1270.0 1476.9,1294.6 1491.0,1304.2 1513.9,1312.2 1543.8,1317.4 1570.0,1319.9 1574.3,1321.9 1604.2,1321.9 1607.0,1323.9 1638.3,1323.9 1639.8,1325.9 1659.7,1325.9 1661.1,1327.9 1676.8,1327.9 1676.8,1325.9 1716.6,1325.9 1718.0,1327.9 1729.4,1329.9 1790.6,1329.9 1792.1,1331.9 1878.9,1331.9 1880.3,1333.8 1935.8,1333.8 1937.3,1335.8 2001.3,1335.8 2002.7,1337.8 2056.8,1337.8 2058.3,1339.8 2120.9,1339.8 2122.3,1341.8 2183.5,1341.8 2184.9,1343.8 2204.0,1343.8" stroke="#00ff00"/>
<polyline points="117.0,1366.0 137.8,1366.0 137.8,1364.0 145.6,1364.0 145.6,1361.8 186.7,1361.8 204.5,1364.0 223.4,1364.0 223.4,1366.0 289.0,1366.0 289.0,1367.8 305.7,1367.8 309.1,1364.0 316.9,1364.0 323.5,1360.0 332.4,1357.8 350.2,1355.6 411.4,1355.6 412.5,1357.8 432.5,1357.8 432.5,1360.0 444.7,1360.0 457.0,1364.0 471.4,1364.0 471.4,1366.0 483.7,1367.8 499.2,1367.8 499.2,1369.8 515.9,1371.8 541.5,1373.8 563.7,1375.8 587.1,1377.8 631.1,1377.6 631.1,1379.8 676.3,1379.8 677.9,1382.0 777.5,1382.0 779.1,1384.2 939.5,1384.2 942.6,1386.0 959.7,1386.0 961.3,1383.8 973.7,1383.8 983.1,1386.0 992.4,1388.5 998.6,1391.6 1006.4,1391.6 1008.0,1389.8 1020.4,1387.6 1067.1,1387.6 1070.3,1389.8 1088.9,1389.8 1098.3,1393.5 1107.6,1395.4 1117.0,1393.5 1129.4,1391.6 1160.6,1391.6 1163.7,1389.8 1166.8,1391.6 1182.4,1393.5 1193.3,1395.4 1207.3,1395.4 1219.7,1391.6 1226.0,1389.8 1238.4,1389.8 1241.5,1387.6 1244.6,1389.8 1261.8,1391.6 1282.0,1393.5 1297.6,1395.7 1320.4,1399.2 1350.3,1407.1 1355.6,1409.7 1367.0,1409.7 1367.9,1408.0 1396.1,1408.0 1397.8,1409.7 1434.7,1411.5 1445.3,1411.5 1455.8,1404.5 1499.8,1373.7 1513.9,1364.0 1556.1,1345.6 1566.6,1345.6 1575.4,1350.0 1585.7,1350.4 1598.5,1344.1 1602.7,1344.1 1617.0,1351.8 1639.8,1351.8 1671.1,1364.0 1703.8,1364.0 1705.2,1362.0 1725.2,1362.0 1786.4,1382.0 1800.6,1384.0 1827.7,1389.6 1844.7,1391.6 1893.1,1391.6 1893.1,1393.9 1945.8,1393.9 1947.2,1395.9 2019.8,1395.9 2021.2,1397.9 2082.5,1397.9 2083.9,1399.9 2153.6,1399.9 2155.0,1401.9 2204.0,1401.9" stroke="#ffff00"/>
</g>
<g fill="#3399ff" shape-rendering="crispEdges"><rect x="121" y="249" width="3" height="2"/><rect x="133" y="246" width="5" height="2"/><rect x="162" y="252" width="2" height="1"/><rect x="194" y="254" width="7" height="2"/><rect x="215" y="255" width="3" height="2"/><rect x="229" y="256" width="5" height="2"/><rect x="244" y="253" width="8" height="2"/><rect x="252" y="257" width="3" height="1"/><rect x="255" y="258" width="8" height="2"/><rect x="263" y="259" width="1" height="2"/></g>
<g fill="#3399ff" shape-rendering="crispEdges"><rect x="1690" y="253" width="2" height="1"/><rect x="1692" y="252" width="6" height="1"/><rect x="1710" y="254" width="7" height="1"/><rect x="1719" y="253" width="7" height="1"/><rect x="1738" y="253" width="5" height="1"/><rect x="1743" y="252" width="4" height="1"/><rect x="1763" y="254" width="7" height="1"/><rect x="1791" y="253" width="5" height="1"/><rect x="1805" y="253" width="9" height="1"/><rect x="1840" y="253" width="9" height="1"/><rect x="1855" y="253" width="9" height="1"/><rect x="1876" y="253" width="3" height="1"/><rect x="1896" y="253" width="2" height="1"/><rect x="1898" y="250" width="2" height="1"/><rect x="1900" y="250" width="3" height="1"/><rect x="1903" y="250" width="2" height="1"/><rect x="1905" y="250" width="4" height="1"/><rect x="1909" y="250" width="5" height="1"/><rect x="1914" y="250" width="3" height="1"/><rect x="1936" y="250" width="4" height="1"/><rect x="1940" y="253" width="3" height="1"/><rect x="1943" y="250" width="8" height="1"/><rect x="1951" y="253" width="6" height="1"/><rect x="1961" y="250" width="6" height="1"/><rect x="1983" y="254" width="3" height="1"/><rect x="1992" y="251" width="6" height="1"/><rect x="1998" y="251" width="8" height="1"/><rect x="2006" y="251" width="5" height="1"/><rect x="2011" y="254" width="3" height="1"/><rect x="2014" y="254" width="9" height="1"/><rect x="2028" y="251" width="8" height="1"/><rect x="2048" y="254" width="9" height="1"/><rect x="2057" y="254" width="7" height="1"/><rect x="2064" y="254" width="6" height="1"/><rect x="2070" y="254" width="3" height="1"/><rect x="2073" y="254" width="9" height="1"/><rect x="2087" y="251" width="3" height="1"/><rect x="2090" y="251" width="3" height="1"/><rect x="2093" y="251" width="7" height="1"/><rect x="2108" y="251" width="6" height="1"/><rect x="2122" y="254" width="3" height="1"/><rect x="2125" y="254" width="9" height="1"/><rect x="2134" y="254" width="7" height="1"/><rect x="2149" y="251" width="6" height="1"/><rect x="2166" y="251" width="3" height="1"/><rect x="2180" y="251" width="2" height="1"/><rect x="2182" y="254" width="7" height="1"/><rect x="2189" y="254" width="4" height="1"/><rect x="2193" y="251" width="3" height="1"/></g>
<g fill="#3399ff" shape-rendering="crispEdges"><rect x="450" y="290" width="5" height="1"/><rect x="463" y="286" width="4" height="1"/><rect x="469" y="288" width="3" height="1"/><rect x="513" y="293" width="3" height="1"/><rect x="583" y="301" width="9" height="1"/><rect x="592" y="297" width="4" height="1"/><rect x="596" y="300" width="3" height="1"/><rect x="622" y="301" width="3" height="1"/><rect x="633" y="295" width="6" height="1"/><rect x="696" y="303" width="7" height="1"/><rect x="741" y="304" width="7" height="1"/><rect x="754" y="308" width="8" height="1"/><rect x="768" y="303" width="6" height="1"/><rect x="774" y="302" width="3" height="1"/><rect x="782" y="305" width="4" height="1"/><rect x="795" y="304" width="3" height="1"/><rect x="841" y="295" width="8" height="1"/><rect x="859" y="301" width="5" height="1"/><rect x="874" y="305" width="6" height="1"/><rect x="895" y="303" width="3" height="1"/><rect x="898" y="306" width="2" height="1"/></g>
<g fill="#3399ff" shape-rendering="crispEdges"><rect x="306" y="237" width="3" height="1"/><rect x="309" y="241" width="2" height="1"/><rect x="311" y="239" width="3" height="1"/><rect x="319" y="243" width="2" height="1"/><rect x="321" y="243" width="2" height="2"/><rect x="323" y="249" width="4" height="1"/><rect x="327" y="250" width="3" height="2"/><rect x="330" y="249" width="3" height="1"/><rect x="333" y="254" width="5" height="2"/><rect x="338" y="258" width="9" height="2"/><rect x="352" y="261" width="5" height="2"/><rect x="370" y="274" width="3" height="2"/><rect x="377" y="279" width="8" height="2"/><rect x="392" y="286" width="9" height="1"/><rect x="401" y="289" width="6" height="1"/><rect x="413" y="289" width="7" height="2"/></g>
<g fill="#3399ff" shape-rendering="crispEdges"><rect x="1445" y="178" width="3" height="1"/><rect x="1461" y="183" width="7" height="1"/><rect x="1481" y="194" width="3" height="1"/><rect x="1501" y="198" width="6" height="1"/><rect x="1507" y="200" width="6" height="1"/><rect x="1513" y="205" width="7" height="1"/><rect x="1527" y="205" width="6" height="1"/><rect x="1536" y="207" width="6" height="1"/><rect x="1542" y="209" width="5" height="1"/><rect x="1554" y="214" width="6" height="1"/><rect x="1564" y="216" width="9" height="1"/><rect x="1584" y="219" width="9" height="1"/><rect x="1593" y="221" width="8" height="1"/><rect x="1601" y="221" width="3" height="1"/><rect x="1613" y="223" width="4" height="1"/><rect x="1617" y="224" width="7" height="1"/><rect x="1644" y="225" width="9" height="1"/><rect x="1659" y="226" width="8" height="1"/></g>
<g fill="#ffffff" shape-rendering="crispEdges"><rect x="1452" y="496" width="5" height="2"/><rect x="1457" y="492" width="4" height="2"/><rect x="1461" y="496" width="2" height="2"/><rect x="1467" y="496" width="6" height="2"/><rect x="1473" y="496" width="6" height="2"/><rect x="1482" y="496" width="7" height="1"/><rect x="1489" y="492" width="5" height="2"/><rect x="1502" y="496" width="5" height="2"/><rect x="1507" y="496" width="9" height="1"/><rect x="1516" y="496" width="3" height="2"/><rect x="1519" y="493" width="9" height="1"/><rect x="1528" y="496" width="3" height="2"/><rect x="1531" y="496" width="6" height="2"/><rect x="1545" y="496" width="5" height="1"/><rect x="1550" y="496" width="3" height="2"/><rect x="1553" y="496" width="2" height="2"/><rect x="1555" y="496" width="7" height="1"/><rect x="1570" y="496" width="3" height="2"/><rect x="1573" y="496" width="6" height="1"/><rect x="1579" y="496" width="7" height="2"/><rect x="1586" y="496" width="4" height="2"/><rect x="1590" y="496" width="3" height="1"/><rect x="1593" y="493" width="3" height="1"/><rect x="1596" y="496" width="4" height="1"/><rect x="1616" y="496" width="8" height="1"/><rect x="1624" y="496" width="5" height="1"/><rect x="1629" y="496" width="8" height="2"/><rect x="1637" y="492" width="5" height="2"/><rect x="1642" y="496" width="6" height="1"/><rect x="1656" y="496" width="4" height="2"/><rect x="1671" y="493" width="2" height="1"/><rect x="1673" y="496" width="4" height="2"/><rect x="1677" y="496" width="8" height="2"/><rect x="1692" y="496" width="9" height="1"/><rect x="1701" y="496" width="2" height="2"/><rect x="1705" y="496" width="9" height="2"/><rect x="1724" y="493" width="2" height="2"/><rect x="1736" y="492" width="5" height="2"/><rect x="1741" y="489" width="9" height="1"/><rect x="1750" y="493" width="9" height="1"/><rect x="1759" y="494" width="2" height="1"/><rect x="1767" y="496" width="3" height="2"/><rect x="1775" y="496" width="6" height="2"/><rect x="1781" y="496" width="3" height="2"/><rect x="1784" y="496" width="8" height="2"/><rect x="1792" y="494" width="3" height="2"/><rect x="1795" y="494" width="9" height="1"/><rect x="1811" y="496" width="4" height="2"/><rect x="1815" y="496" width="6" height="1"/><rect x="1821" y="493" width="2" height="1"/><rect x="1832" y="496" width="9" height="2"/><rect x="1841" y="496" width="6" height="1"/><rect x="1847" y="496" width="2" height="2"/><rect x="1855" y="496" width="9" height="1"/><rect x="1877" y="493" width="7" height="1"/><rect x="1884" y="496" width="4" height="1"/><rect x="1888" y="496" width="7" height="1"/><rect x="1895" y="496" width="8" height="2"/><rect x="1903" y="496" width="7" height="1"/><rect x="1910" y="496" width="2" height="1"/><rect x="1919" y="496" width="3" height="2"/><rect x="1925" y="496" width="3" height="1"/><rect x="1947" y="496" width="5" height="2"/><rect x="1961" y="496" width="8" height="2"/><rect x="1969" y="496" width="6" height="2"/><rect x="1979" y="496" width="9" height="2"/><rect x="1996" y="492" width="2" height="2"/><rect x="2004" y="496" width="6" height="2"/><rect x="2010" y="496" width="3" height="2"/><rect x="2017" y="496" width="4" height="2"/><rect x="2021" y="496" width="2" height="1"/><rect x="2023" y="496" width="5" height="1"/><rect x="2028" y="496" width="6" height="2"/><rect x="2034" y="496" width="4" height="1"/><rect x="2038" y="496" width="3" height="1"/><rect x="2041" y="496" width="8" height="2"/><rect x="2049" y="496" width="3" height="2"/><rect x="2052" y="496" width="8" height="2"/><rect x="2060" y="493" width="7" height="1"/><rect x="2073" y="496" width="2" height="1"/><rect x="2075" y="496" width="4" height="1"/><rect x="2079" y="493" width="5" height="1"/><rect x="2093" y="496" width="8" height="1"/><rect x="2101" y="496" width="3" height="2"/><rect x="2110" y="493" width="8" height="1"/><rect x="2118" y="496" width="6" height="2"/><rect x="2124" y="496" width="9" height="1"/><rect x="2138" y="496" width="3" height="2"/><rect x="2157" y="496" width="4" height="1"/><rect x="2161" y="493" width="2" height="1"/><rect x="2163" y="496" width="6" height="1"/><rect x="2172" y="493" width="6" height="1"/><rect x="2178" y="492" width="2" height="2"/><rect x="2198" y="494" width="6" height="1"/></g>
<g fill="#ffffff" shape-rendering="crispEdges"><rect x="130" y="495" width="4" height="1"/><rect x="142" y="494" width="5" height="2"/><rect x="151" y="495" width="8" height="1"/><rect x="159" y="495" width="9" height="1"/><rect x="177" y="495" width="6" height="1"/><rect x="192" y="495" width="8" height="1"/><rect x="200" y="495" width="4" height="1"/><rect x="204" y="494" width="7" height="2"/><rect x="224" y="495" width="4" height="1"/><rect x="251" y="494" width="5" height="2"/><rect x="281" y="494" width="3" height="2"/><rect x="284" y="495" width="4" height="1"/><rect x="294" y="495" width="6" height="1"/><rect x="313" y="494" width="8" height="2"/><rect x="327" y="495" width="8" height="1"/><rect x="335" y="495" width="9" height="1"/><rect x="344" y="495" width="6" height="1"/></g>
<g fill="#ffffff" shape-rendering="crispEdges"><rect x="935" y="495" width="8" height="1"/><rect x="943" y="495" width="4" height="1"/><rect x="977" y="491" width="8" height="1"/><rect x="1008" y="495" width="6" height="1"/><rect x="1014" y="495" width="8" height="1"/><rect x="1036" y="494" width="4" height="1"/></g>
<g shape-rendering="crispEdges">
<rect x="277" y="1119" width="4" height="27" fill="#00ff00"/>
<rect x="279" y="526" width="4" height="25" fill="#808000"/>
</g>
<g shape-rendering="crispEdges">
<rect x="115" y="84" width="2091" height="2" fill="#fff"/>
<rect x="115" y="84" width="2" height="1361" fill="#fff"/>
<rect x="2204" y="84" width="2" height="1361" fill="#fff"/>
<rect x="115" y="1443" width="2091" height="2" fill="#fff"/>
<rect x="117" y="352" width="2087" height="2" fill="#c0c0c0"/>
<rect x="117" y="356" width="2087" height="2" fill="#c0c0c0"/>
<rect x="117" y="624" width="2087" height="2" fill="#c0c0c0"/>
<rect x="117" y="628" width="2087" height="2" fill="#c0c0c0"/>
<rect x="117" y="897" width="2087" height="2" fill="#c0c0c0"/>
<rect x="117" y="901" width="2087" height="2" fill="#c0c0c0"/>
<rect x="117" y="1169" width="2087" height="2" fill="#c0c0c0"/>
<rect x="117" y="1173" width="2087" height="2" fill="#c0c0c0"/>
<rect x="105" y="112" width="10" height="2" fill="#fff"/>
<rect x="105" y="150" width="10" height="2" fill="#fff"/>
<rect x="105" y="186" width="10" height="2" fill="#fff"/>
<rect x="105" y="224" width="10" height="2" fill="#fff"/>
<rect x="105" y="262" width="10" height="2" fill="#fff"/>
<rect x="105" y="300" width="10" height="2" fill="#fff"/>
<rect x="105" y="338" width="10" height="2" fill="#fff"/>
<rect x="105" y="360" width="10" height="2" fill="#fff"/>
<rect x="105" y="386" width="10" height="2" fill="#fff"/>
<rect x="105" y="414" width="10" height="2" fill="#fff"/>
<rect x="105" y="442" width="10" height="2" fill="#fff"/>
<rect x="105" y="468" width="10" height="2" fill="#fff"/>
<rect x="105" y="496" width="10" height="2" fill="#fff"/>
<rect x="105" y="524" width="10" height="2" fill="#fff"/>
<rect x="105" y="552" width="10" height="2" fill="#fff"/>
<rect x="105" y="578" width="10" height="2" fill="#fff"/>
<rect x="105" y="606" width="10" height="2" fill="#fff"/>
<rect x="105" y="644" width="10" height="2" fill="#fff"/>
<rect x="105" y="692" width="10" height="2" fill="#fff"/>
<rect x="105" y="740" width="10" height="2" fill="#fff"/>
<rect x="105" y="787" width="10" height="2" fill="#fff"/>
<rect x="105" y="835" width="10" height="2" fill="#fff"/>
<rect x="105" y="883" width="10" height="2" fill="#fff"/>
<rect x="105" y="921" width="10" height="2" fill="#fff"/>
<rect x="105" y="947" width="10" height="2" fill="#fff"/>
<rect x="105" y="973" width="10" height="2" fill="#fff"/>
<rect x="105" y="999" width="10" height="2" fill="#fff"/>
<rect x="105" y="1025" width="10" height="2" fill="#fff"/>
<rect x="105" y="1053" width="10" height="2" fill="#fff"/>
<rect x="105" y="1079" width="10" height="2" fill="#fff"/>
<rect x="105" y="1105" width="10" height="2" fill="#fff"/>
<rect x="105" y="1131" width="10" height="2" fill="#fff"/>
<rect x="105" y="1157" width="10" height="2" fill="#fff"/>
<rect x="105" y="1193" width="10" height="2" fill="#fff"/>
<rect x="105" y="1233" width="10" height="2" fill="#fff"/>
<rect x="105" y="1273" width="10" height="2" fill="#fff"/>
<rect x="105" y="1313" width="10" height="2" fill="#fff"/>
<rect x="105" y="1351" width="10" height="2" fill="#fff"/>
<rect x="105" y="1391" width="10" height="2" fill="#fff"/>
<rect x="105" y="1431" width="10" height="2" fill="#fff"/>
<rect x="167" y="1445" width="2" height="10" fill="#fff"/>
<rect x="263" y="1445" width="2" height="10" fill="#fff"/>
<rect x="359" y="1445" width="2" height="10" fill="#fff"/>
<rect x="455" y="1445" width="2" height="10" fill="#fff"/>
<rect x="551" y="1445" width="2" height="10" fill="#fff"/>
<rect x="647" y="1445" width="2" height="10" fill="#fff"/>
<rect x="743" y="1445" width="2" height="10" fill="#fff"/>
<rect x="839" y="1445" width="2" height="10" fill="#fff"/>
<rect x="935" y="1445" width="2" height="10" fill="#fff"/>
<rect x="1031" y="1445" width="2" height="10" fill="#fff"/>
<rect x="1127" y="1445" width="2" height="10" fill="#fff"/>
<rect x="1224" y="1445" width="2" height="10" fill="#fff"/>
<rect x="1320" y="1445" width="2" height="10" fill="#fff"/>
<rect x="1416" y="1445" width="2" height="10" fill="#fff"/>
<rect x="1512" y="1445" width="2" height="10" fill="#fff"/>
<rect x="1608" y="1445" width="2" height="10" fill="#fff"/>
<rect x="1704" y="1445" width="2" height="10" fill="#fff"/>
<rect x="1800" y="1445" width="2" height="10" fill="#fff"/>
<rect x="1894" y="1445" width="2" height="10" fill="#fff"/>
<rect x="1990" y="1445" width="2" height="10" fill="#fff"/>
<rect x="2086" y="1445" width="2" height="10" fill="#fff"/>
</g>
<g shape-rendering="crispEdges" fill="#ffff00">
<rect x="1422" y="86" width="2" height="1357"/>
<rect x="1412" y="118" width="22" height="6"/>
<rect x="1410" y="120" width="26" height="2"/>
<rect x="1412" y="374" width="22" height="6"/>
<rect x="1410" y="376" width="26" height="2"/>
<rect x="1412" y="408" width="22" height="6"/>
<rect x="1410" y="410" width="26" height="2"/>
<rect x="1412" y="738" width="22" height="6"/>
<rect x="1410" y="740" width="26" height="2"/>
<rect x="1412" y="929" width="22" height="6"/>
<rect x="1410" y="931" width="26" height="2"/>
<rect x="1412" y="1207" width="22" height="6"/>
<rect x="1410" y="1209" width="26" height="2"/>
<rect x="1412" y="1407" width="22" height="6"/>
<rect x="1410" y="1409" width="26" height="2"/>
</g>
<text x="123.01" y="110" font-size="22px" font-weight="normal" fill="#3399ff" textLength="206.88" lengthAdjust="spacingAndGlyphs">Engine Speed (RPM)</text>
<text x="362.32" y="110" font-size="22px" font-weight="normal" fill="#3399ff" textLength="47.32" lengthAdjust="spacingAndGlyphs">5793</text>
<text x="123.09" y="382" font-size="22px" font-weight="bold" fill="#ffffff" textLength="268.15" lengthAdjust="spacingAndGlyphs">Exhaust Pressure (kPa)</text>
<text x="393.93" y="382" font-size="22px" font-weight="bold" fill="#ffffff" textLength="49.12" lengthAdjust="spacingAndGlyphs">88.7</text>
<text x="124.43" y="403.6" font-size="22px" font-weight="normal" fill="#808000" textLength="105.33" lengthAdjust="spacingAndGlyphs">MGP (kPa)</text>
<text x="394.36" y="403.6" font-size="22px" font-weight="normal" fill="#808000" textLength="40.17" lengthAdjust="spacingAndGlyphs">63.7</text>
<text x="124.37" y="654" font-size="22px" font-weight="normal" fill="#c0c0c0" textLength="47.82" lengthAdjust="spacingAndGlyphs">Gear</text>
<text x="223.68" y="654" font-size="22px" font-weight="normal" fill="#c0c0c0" textLength="14.17" lengthAdjust="spacingAndGlyphs">3</text>
<text x="125.00" y="927" font-size="22px" font-weight="normal" fill="#00ff00" textLength="150.97" lengthAdjust="spacingAndGlyphs">TPS (Main) (%)</text>
<text x="314.36" y="927" font-size="22px" font-weight="normal" fill="#00ff00" textLength="40.15" lengthAdjust="spacingAndGlyphs">85.9</text>
<text x="123.86" y="1199" font-size="22px" font-weight="normal" fill="#ffff00" textLength="83.05" lengthAdjust="spacingAndGlyphs">IAT (°C)</text>
<text x="642.36" y="1199" font-size="22px" font-weight="normal" fill="#ffff00" textLength="24.94" lengthAdjust="spacingAndGlyphs">25</text>
<text x="124.97" y="1221" font-size="22px" font-weight="normal" fill="#00ff00" textLength="462.04" lengthAdjust="spacingAndGlyphs">GP Temperature 1 - Pre-Intercooler Temp (°C)</text>
<text x="642.37" y="1221" font-size="22px" font-weight="normal" fill="#00ff00" textLength="42.48" lengthAdjust="spacingAndGlyphs">75.9</text>
<text x="1027.99" y="42" font-size="31px" font-weight="normal" fill="#3399ff" textLength="131.60" lengthAdjust="spacingAndGlyphs">Time Plot</text>
<text x="1077.26" y="72" font-size="22px" font-weight="normal" fill="#ff0000" textLength="166.73" lengthAdjust="spacingAndGlyphs">PC Logged Data</text>
<text x="17.97" y="1477" font-size="23px" font-weight="normal" fill="#ffffff" textLength="38.15" lengthAdjust="spacingAndGlyphs">m:s</text>
<g font-size="22px" fill="#fff">
<text x="99.6" y="123.5" text-anchor="end">6000</text>
<text x="99.6" y="161.5" text-anchor="end">5000</text>
<text x="99.6" y="197.5" text-anchor="end">4000</text>
<text x="99.6" y="235.5" text-anchor="end">3000</text>
<text x="99.6" y="273.5" text-anchor="end">2000</text>
<text x="99.6" y="311.5" text-anchor="end">1000</text>
<text x="99.6" y="349.5" text-anchor="end">0</text>
<text x="99.6" y="371.5" text-anchor="end">100</text>
<text x="99.6" y="397.5" text-anchor="end">80</text>
<text x="99.6" y="425.5" text-anchor="end">60</text>
<text x="99.6" y="453.5" text-anchor="end">40</text>
<text x="99.6" y="479.5" text-anchor="end">20</text>
<text x="99.6" y="507.5" text-anchor="end">0</text>
<text x="99.6" y="535.5" text-anchor="end">-20</text>
<text x="99.6" y="563.5" text-anchor="end">-40</text>
<text x="99.6" y="589.5" text-anchor="end">-60</text>
<text x="99.6" y="617.5" text-anchor="end">-80</text>
<text x="99.6" y="655.5" text-anchor="end">5</text>
<text x="99.6" y="703.5" text-anchor="end">4</text>
<text x="99.6" y="751.5" text-anchor="end">3</text>
<text x="99.6" y="798.5" text-anchor="end">2</text>
<text x="99.6" y="846.5" text-anchor="end">1</text>
<text x="99.6" y="894.5" text-anchor="end">0</text>
<text x="99.6" y="932.5" text-anchor="end">90</text>
<text x="99.6" y="958.5" text-anchor="end">80</text>
<text x="99.6" y="984.5" text-anchor="end">70</text>
<text x="99.6" y="1010.5" text-anchor="end">60</text>
<text x="99.6" y="1036.5" text-anchor="end">50</text>
<text x="99.6" y="1064.5" text-anchor="end">40</text>
<text x="99.6" y="1090.5" text-anchor="end">30</text>
<text x="99.6" y="1116.5" text-anchor="end">20</text>
<text x="99.6" y="1142.5" text-anchor="end">10</text>
<text x="99.6" y="1168.5" text-anchor="end">0</text>
<text x="99.6" y="1204.5" text-anchor="end">80</text>
<text x="99.6" y="1244.5" text-anchor="end">70</text>
<text x="99.6" y="1284.5" text-anchor="end">60</text>
<text x="99.6" y="1324.5" text-anchor="end">50</text>
<text x="99.6" y="1362.5" text-anchor="end">40</text>
<text x="99.6" y="1402.5" text-anchor="end">30</text>
<text x="99.6" y="1442.5" text-anchor="end">20</text>
</g>
<g font-size="22px" fill="#fff" letter-spacing="0.4px">
<text x="167" y="1477" text-anchor="middle">84:25</text>
<text x="263" y="1477" text-anchor="middle">84:30</text>
<text x="359" y="1477" text-anchor="middle">84:35</text>
<text x="455" y="1477" text-anchor="middle">84:40</text>
<text x="551" y="1477" text-anchor="middle">84:45</text>
<text x="647" y="1477" text-anchor="middle">84:50</text>
<text x="743" y="1477" text-anchor="middle">84:55</text>
<text x="839" y="1477" text-anchor="middle">85:00</text>
<text x="935" y="1477" text-anchor="middle">85:05</text>
<text x="1031" y="1477" text-anchor="middle">85:10</text>
<text x="1127" y="1477" text-anchor="middle">85:15</text>
<text x="1224" y="1477" text-anchor="middle">85:20</text>
<text x="1320" y="1477" text-anchor="middle">85:25</text>
<text x="1416" y="1477" text-anchor="middle">85:30</text>
<text x="1512" y="1477" text-anchor="middle">85:35</text>
<text x="1608" y="1477" text-anchor="middle">85:40</text>
<text x="1704" y="1477" text-anchor="middle">85:45</text>
<text x="1800" y="1477" text-anchor="middle">85:50</text>
<text x="1894" y="1477" text-anchor="middle">85:55</text>
<text x="1990" y="1477" text-anchor="middle">86:00</text>
<text x="2086" y="1477" text-anchor="middle">86:05</text>
</g>
<g fill="#a8a8a8" stroke="none" shape-rendering="crispEdges">
<rect x="2192" y="19" width="2" height="21"/>
<rect x="2182" y="28" width="22" height="2"/>
<rect x="2190" y="18" width="6" height="2"/><rect x="2190" y="38" width="6" height="2"/>
<rect x="2182" y="26" width="2" height="6"/><rect x="2202" y="26" width="2" height="6"/>
<rect x="2188" y="20" width="2" height="2"/>
<rect x="2196" y="20" width="2" height="2"/>
<rect x="2184" y="24" width="2" height="2"/>
<rect x="2200" y="24" width="2" height="2"/>
<rect x="2184" y="32" width="2" height="2"/>
<rect x="2200" y="32" width="2" height="2"/>
<rect x="2188" y="36" width="2" height="2"/>
<rect x="2196" y="36" width="2" height="2"/>
</g>
<path d="M2213,19 L2233,39 M2233,19 L2213,39" stroke="#a8a8a8" stroke-width="3.2" fill="none"/>
<g fill="#5a5a5a" shape-rendering="crispEdges">
<rect x="2214" y="382" width="22" height="220"/>
</g>
<path d="M2214,380 L2236,380 L2225,368 Z" fill="#5a5a5a"/>
<path d="M2214,604 L2236,604 L2225,616 Z" fill="#5a5a5a"/>
<path d="M1638,1504 L1650,1493 L1650,1515 Z" fill="#5a5a5a"/>
<rect x="1652" y="1493" width="6" height="22" fill="#5a5a5a" shape-rendering="crispEdges"/>
<path d="M1672,1504 L1660,1493 L1660,1515 Z" fill="#5a5a5a"/>
</svg></body></html>
